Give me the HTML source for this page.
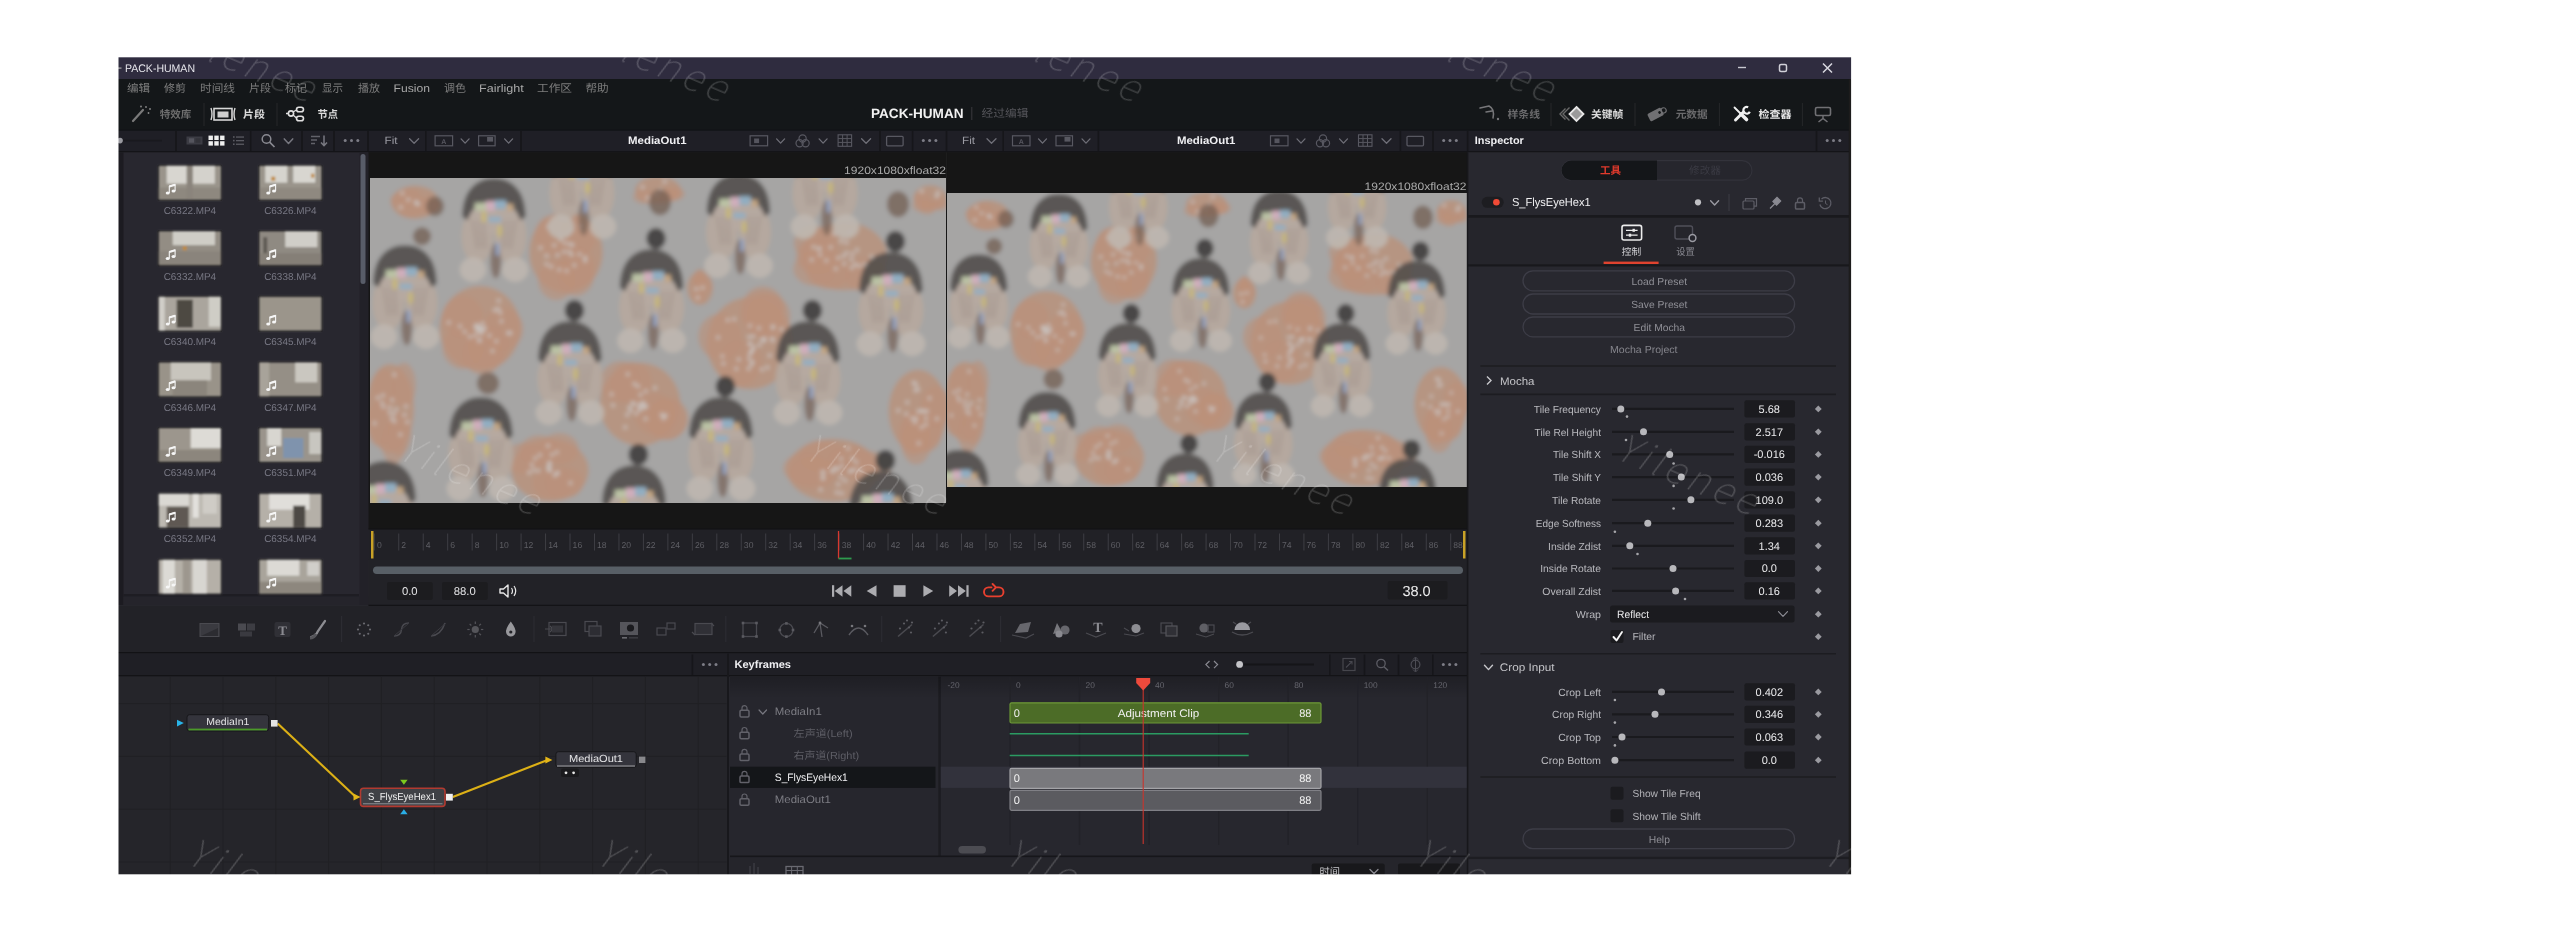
<!DOCTYPE html>
<html lang="zh-CN"><head><meta charset="utf-8"><title>PACK-HUMAN</title>
<style>
html,body{margin:0;padding:0;background:#fff;}
body{width:2560px;height:932px;overflow:hidden;position:relative;font-family:"Liberation Sans","Noto Sans CJK SC",sans-serif;}
svg{position:absolute;left:0;top:0;display:block;will-change:transform;}
svg text{font-family:"Liberation Sans","Noto Sans CJK SC",sans-serif;text-rendering:geometricPrecision;}
svg text.sf{font-family:"Liberation Serif","DejaVu Serif",serif;}
svg text.dj{font-family:"DejaVu Sans","Noto Sans CJK SC",sans-serif;}
svg text.wm{font-family:"Noto Sans CJK SC","Liberation Sans",sans-serif;font-weight:100;font-style:italic;}
</style></head><body>
<svg width="2560" height="932" viewBox="0 0 2560 932">
<defs>
<filter id="b4" x="-5%" y="-5%" width="110%" height="110%"><feGaussianBlur stdDeviation="2.2"/>
</filter>
<filter id="b06" x="-5%" y="-5%" width="110%" height="110%"><feGaussianBlur stdDeviation="0.9"/>
</filter>
<linearGradient id="shd" x1="0" y1="0" x2="0" y2="1"><stop offset="0" stop-color="#000" stop-opacity="0.2"/>
<stop offset="1" stop-color="#000" stop-opacity="0"/>
</linearGradient>
<clipPath id="app"><rect x="118" y="57" width="1734" height="818"/>
</clipPath>
</defs>
<g clip-path="url(#app)" >
<rect x="112.50" y="57.30" width="1738.60" height="823.00" fill="#26262c" />
<defs><g id="pA"><ellipse cx="-19.0" cy="42.0" rx="18" ry="31" fill="#b8a99e" opacity="0.95"/>
<ellipse cx="19.0" cy="42.0" rx="18" ry="31" fill="#b8a99e" opacity="0.95"/>
<ellipse cx="0.0" cy="22.0" rx="26" ry="18" fill="#b9aba0" opacity="0.95"/>
<line x1="-24" y1="24" x2="-19.2" y2="56" stroke="#8f7d72" stroke-width="1.6" opacity="0.6"/>
<line x1="-18" y1="24" x2="-14.4" y2="56" stroke="#8f7d72" stroke-width="1.6" opacity="0.6"/>
<line x1="-12" y1="24" x2="-9.6" y2="56" stroke="#8f7d72" stroke-width="1.6" opacity="0.6"/>
<line x1="12" y1="24" x2="9.6" y2="56" stroke="#8f7d72" stroke-width="1.6" opacity="0.6"/>
<line x1="18" y1="24" x2="14.4" y2="56" stroke="#8f7d72" stroke-width="1.6" opacity="0.6"/>
<line x1="24" y1="24" x2="19.2" y2="56" stroke="#8f7d72" stroke-width="1.6" opacity="0.6"/>
<ellipse cx="-24.0" cy="80.0" rx="15" ry="14" fill="#c4bbb2" opacity="0.9"/>
<ellipse cx="24.0" cy="80.0" rx="15" ry="14" fill="#c4bbb2" opacity="0.9"/>
<ellipse cx="2.0" cy="70.0" rx="6" ry="20" fill="#6d564a" opacity="0.7"/>
<path d="M-36 20 C-36 -10 -20 -24 0 -24 C20 -24 36 -10 36 20 L30 24 C24 6 12 2 0 2 C-12 2 -24 6 -30 24 Z" fill="#423e3c" opacity="0.88"/>
<ellipse cx="5.0" cy="-36.0" rx="11" ry="12" fill="#353130" opacity="0.95"/>
<rect x="-22" y="4" width="13" height="9" fill="#bfc9a6"/>
<rect x="-9" y="2" width="10" height="11" fill="#d8b0c0"/>
<rect x="1" y="1" width="13" height="10" fill="#8eb0c8"/>
<rect x="14" y="5" width="8" height="8" fill="#c8a67e"/>
<rect x="-14" y="14" width="5" height="12" fill="#cdbb70"/>
<rect x="-6" y="20" width="14" height="6" fill="#90b0c8"/>
<rect x="4" y="30" width="5" height="12" fill="#cdbb70"/>
<rect x="2" y="50" width="4" height="14" fill="#90a6cc"/>
</g>
<g id="pB"><ellipse cx="-19.0" cy="42.0" rx="18" ry="31" fill="#b8a99e" opacity="0.95"/>
<ellipse cx="19.0" cy="42.0" rx="18" ry="31" fill="#b8a99e" opacity="0.95"/>
<ellipse cx="0.0" cy="22.0" rx="26" ry="18" fill="#b9aba0" opacity="0.95"/>
<line x1="-24" y1="24" x2="-19.2" y2="56" stroke="#8f7d72" stroke-width="1.6" opacity="0.6"/>
<line x1="-18" y1="24" x2="-14.4" y2="56" stroke="#8f7d72" stroke-width="1.6" opacity="0.6"/>
<line x1="-12" y1="24" x2="-9.6" y2="56" stroke="#8f7d72" stroke-width="1.6" opacity="0.6"/>
<line x1="12" y1="24" x2="9.6" y2="56" stroke="#8f7d72" stroke-width="1.6" opacity="0.6"/>
<line x1="18" y1="24" x2="14.4" y2="56" stroke="#8f7d72" stroke-width="1.6" opacity="0.6"/>
<line x1="24" y1="24" x2="19.2" y2="56" stroke="#8f7d72" stroke-width="1.6" opacity="0.6"/>
<ellipse cx="-24.0" cy="80.0" rx="15" ry="14" fill="#c4bbb2" opacity="0.9"/>
<ellipse cx="24.0" cy="80.0" rx="15" ry="14" fill="#c4bbb2" opacity="0.9"/>
<ellipse cx="2.0" cy="70.0" rx="6" ry="20" fill="#6d564a" opacity="0.7"/>
<path d="M-36 20 C-36 -10 -20 -24 0 -24 C20 -24 36 -10 36 20 L30 24 C24 6 12 2 0 2 C-12 2 -24 6 -30 24 Z" fill="#423e3c" opacity="0.88"/>
<rect x="-22" y="4" width="13" height="9" fill="#bfc9a6"/>
<rect x="-9" y="2" width="10" height="11" fill="#d8b0c0"/>
<rect x="1" y="1" width="13" height="10" fill="#8eb0c8"/>
<rect x="14" y="5" width="8" height="8" fill="#c8a67e"/>
<rect x="-14" y="14" width="5" height="12" fill="#cdbb70"/>
<rect x="-6" y="20" width="14" height="6" fill="#90b0c8"/>
<rect x="4" y="30" width="5" height="12" fill="#cdbb70"/>
<rect x="2" y="50" width="4" height="14" fill="#90a6cc"/>
</g>
<clipPath id="pc"><rect x="0" y="0" width="576" height="324"/>
</clipPath><g id="pic" clip-path="url(#pc)"><g filter="url(#b4)"><rect x="-10" y="-10" width="596" height="344" fill="#a7a6a5"/>
<ellipse cx="45.0" cy="24.0" rx="23.92" ry="16.560000000000002" fill="#bf8e73" opacity="0.8"/>
<ellipse cx="40.1" cy="30.8" rx="11.96" ry="8.280000000000001" fill="#bf8e73" opacity="0.6400000000000001"/>
<ellipse cx="39.0" cy="18.2" rx="11.96" ry="8.280000000000001" fill="#bf8e73" opacity="0.6400000000000001"/>
<ellipse cx="32.3" cy="22.0" rx="11.96" ry="8.280000000000001" fill="#bf8e73" opacity="0.6400000000000001"/>
<ellipse cx="58.5" cy="27.6" rx="11.96" ry="8.280000000000001" fill="#bf8e73" opacity="0.6400000000000001"/>
<ellipse cx="58.3" cy="26.2" rx="11.96" ry="8.280000000000001" fill="#bf8e73" opacity="0.6400000000000001"/>
<circle cx="46.6" cy="24.5" r="2" fill="#d2cdc9" opacity="0.85"/>
<circle cx="30.9" cy="29.0" r="2" fill="#d2cdc9" opacity="0.85"/>
<circle cx="48.0" cy="26.1" r="2" fill="#d2cdc9" opacity="0.85"/>
<circle cx="32.3" cy="15.0" r="2" fill="#d2cdc9" opacity="0.85"/>
<circle cx="38.3" cy="21.6" r="2" fill="#d2cdc9" opacity="0.85"/>
<circle cx="45.9" cy="23.9" r="2" fill="#d2cdc9" opacity="0.85"/>
<ellipse cx="196.0" cy="74.0" rx="36.800000000000004" ry="40.480000000000004" fill="#bf8e73" opacity="0.8"/>
<ellipse cx="207.9" cy="57.7" rx="18.400000000000002" ry="20.240000000000002" fill="#bf8e73" opacity="0.6400000000000001"/>
<ellipse cx="206.2" cy="88.2" rx="18.400000000000002" ry="20.240000000000002" fill="#bf8e73" opacity="0.6400000000000001"/>
<ellipse cx="186.4" cy="101.5" rx="18.400000000000002" ry="20.240000000000002" fill="#bf8e73" opacity="0.6400000000000001"/>
<ellipse cx="205.8" cy="97.2" rx="18.400000000000002" ry="20.240000000000002" fill="#bf8e73" opacity="0.6400000000000001"/>
<ellipse cx="183.0" cy="57.0" rx="18.400000000000002" ry="20.240000000000002" fill="#bf8e73" opacity="0.6400000000000001"/>
<circle cx="194.2" cy="73.4" r="2" fill="#d2cdc9" opacity="0.85"/>
<circle cx="201.6" cy="76.4" r="2" fill="#d2cdc9" opacity="0.85"/>
<circle cx="190.6" cy="61.5" r="2" fill="#d2cdc9" opacity="0.85"/>
<circle cx="189.3" cy="91.5" r="2" fill="#d2cdc9" opacity="0.85"/>
<circle cx="187.6" cy="76.8" r="2" fill="#d2cdc9" opacity="0.85"/>
<circle cx="201.6" cy="52.2" r="2" fill="#d2cdc9" opacity="0.85"/>
<circle cx="196.6" cy="92.6" r="2" fill="#d2cdc9" opacity="0.85"/>
<circle cx="170.6" cy="69.6" r="2" fill="#d2cdc9" opacity="0.85"/>
<circle cx="194.9" cy="64.8" r="2" fill="#d2cdc9" opacity="0.85"/>
<circle cx="199.4" cy="73.5" r="2" fill="#d2cdc9" opacity="0.85"/>
<circle cx="176.6" cy="86.1" r="2" fill="#d2cdc9" opacity="0.85"/>
<circle cx="204.3" cy="86.9" r="2" fill="#d2cdc9" opacity="0.85"/>
<circle cx="215.1" cy="79.3" r="2" fill="#d2cdc9" opacity="0.85"/>
<circle cx="197.5" cy="55.5" r="2" fill="#d2cdc9" opacity="0.85"/>
<circle cx="202.5" cy="66.8" r="2" fill="#d2cdc9" opacity="0.85"/>
<circle cx="190.1" cy="55.9" r="2" fill="#d2cdc9" opacity="0.85"/>
<circle cx="184.2" cy="66.9" r="2" fill="#d2cdc9" opacity="0.85"/>
<circle cx="210.8" cy="48.1" r="2" fill="#d2cdc9" opacity="0.85"/>
<circle cx="176.7" cy="77.5" r="2" fill="#d2cdc9" opacity="0.85"/>
<circle cx="215.2" cy="82.4" r="2" fill="#d2cdc9" opacity="0.85"/>
<circle cx="178.3" cy="48.4" r="2" fill="#d2cdc9" opacity="0.85"/>
<circle cx="199.6" cy="65.7" r="2" fill="#d2cdc9" opacity="0.85"/>
<circle cx="181.2" cy="88.3" r="2" fill="#d2cdc9" opacity="0.85"/>
<circle cx="209.5" cy="76.1" r="2" fill="#d2cdc9" opacity="0.85"/>
<ellipse cx="288.0" cy="12.0" rx="23.0" ry="13.8" fill="#bf8e73" opacity="0.8"/>
<ellipse cx="293.1" cy="17.4" rx="11.5" ry="6.9" fill="#bf8e73" opacity="0.6400000000000001"/>
<ellipse cx="303.2" cy="15.5" rx="11.5" ry="6.9" fill="#bf8e73" opacity="0.6400000000000001"/>
<ellipse cx="295.9" cy="17.0" rx="11.5" ry="6.9" fill="#bf8e73" opacity="0.6400000000000001"/>
<ellipse cx="274.7" cy="18.5" rx="11.5" ry="6.9" fill="#bf8e73" opacity="0.6400000000000001"/>
<ellipse cx="299.7" cy="15.9" rx="11.5" ry="6.9" fill="#bf8e73" opacity="0.6400000000000001"/>
<circle cx="272.5" cy="9.0" r="2" fill="#d2cdc9" opacity="0.85"/>
<circle cx="294.7" cy="3.3" r="2" fill="#d2cdc9" opacity="0.85"/>
<circle cx="286.6" cy="16.5" r="2" fill="#d2cdc9" opacity="0.85"/>
<circle cx="277.7" cy="19.6" r="2" fill="#d2cdc9" opacity="0.85"/>
<circle cx="290.7" cy="11.6" r="2" fill="#d2cdc9" opacity="0.85"/>
<ellipse cx="110.0" cy="150.0" rx="40.480000000000004" ry="42.32" fill="#bf8e73" opacity="0.8"/>
<ellipse cx="118.9" cy="168.6" rx="20.240000000000002" ry="21.16" fill="#bf8e73" opacity="0.6400000000000001"/>
<ellipse cx="112.5" cy="175.0" rx="20.240000000000002" ry="21.16" fill="#bf8e73" opacity="0.6400000000000001"/>
<ellipse cx="92.7" cy="138.7" rx="20.240000000000002" ry="21.16" fill="#bf8e73" opacity="0.6400000000000001"/>
<ellipse cx="133.0" cy="150.6" rx="20.240000000000002" ry="21.16" fill="#bf8e73" opacity="0.6400000000000001"/>
<ellipse cx="92.7" cy="169.4" rx="20.240000000000002" ry="21.16" fill="#bf8e73" opacity="0.6400000000000001"/>
<circle cx="131.4" cy="143.1" r="2" fill="#d2cdc9" opacity="0.85"/>
<circle cx="90.1" cy="148.0" r="2" fill="#d2cdc9" opacity="0.85"/>
<circle cx="109.2" cy="148.4" r="2" fill="#d2cdc9" opacity="0.85"/>
<circle cx="130.3" cy="134.4" r="2" fill="#d2cdc9" opacity="0.85"/>
<circle cx="128.2" cy="130.8" r="2" fill="#d2cdc9" opacity="0.85"/>
<circle cx="99.9" cy="158.5" r="2" fill="#d2cdc9" opacity="0.85"/>
<circle cx="126.3" cy="163.0" r="2" fill="#d2cdc9" opacity="0.85"/>
<circle cx="112.0" cy="150.9" r="2" fill="#d2cdc9" opacity="0.85"/>
<circle cx="111.4" cy="155.3" r="2" fill="#d2cdc9" opacity="0.85"/>
<circle cx="109.1" cy="151.5" r="2" fill="#d2cdc9" opacity="0.85"/>
<circle cx="114.9" cy="150.0" r="2" fill="#d2cdc9" opacity="0.85"/>
<circle cx="119.5" cy="157.3" r="2" fill="#d2cdc9" opacity="0.85"/>
<circle cx="138.0" cy="154.7" r="2" fill="#d2cdc9" opacity="0.85"/>
<circle cx="106.4" cy="146.7" r="2" fill="#d2cdc9" opacity="0.85"/>
<circle cx="109.8" cy="161.8" r="2" fill="#d2cdc9" opacity="0.85"/>
<circle cx="107.4" cy="153.1" r="2" fill="#d2cdc9" opacity="0.85"/>
<circle cx="128.7" cy="122.6" r="2" fill="#d2cdc9" opacity="0.85"/>
<circle cx="94.7" cy="153.5" r="2" fill="#d2cdc9" opacity="0.85"/>
<circle cx="112.8" cy="151.8" r="2" fill="#d2cdc9" opacity="0.85"/>
<circle cx="105.3" cy="157.5" r="2" fill="#d2cdc9" opacity="0.85"/>
<circle cx="112.5" cy="145.2" r="2" fill="#d2cdc9" opacity="0.85"/>
<circle cx="140.5" cy="154.7" r="2" fill="#d2cdc9" opacity="0.85"/>
<circle cx="105.3" cy="149.1" r="2" fill="#d2cdc9" opacity="0.85"/>
<circle cx="109.2" cy="149.8" r="2" fill="#d2cdc9" opacity="0.85"/>
<circle cx="78.8" cy="144.2" r="2" fill="#d2cdc9" opacity="0.85"/>
<circle cx="124.7" cy="132.1" r="2" fill="#d2cdc9" opacity="0.85"/>
<circle cx="109.2" cy="162.4" r="2" fill="#d2cdc9" opacity="0.85"/>
<circle cx="122.5" cy="172.7" r="2" fill="#d2cdc9" opacity="0.85"/>
<ellipse cx="380.0" cy="165.0" rx="43.24" ry="46.0" fill="#bf8e73" opacity="0.8"/>
<ellipse cx="349.9" cy="158.4" rx="21.62" ry="23.0" fill="#bf8e73" opacity="0.6400000000000001"/>
<ellipse cx="369.9" cy="184.8" rx="21.62" ry="23.0" fill="#bf8e73" opacity="0.6400000000000001"/>
<ellipse cx="392.9" cy="131.1" rx="21.62" ry="23.0" fill="#bf8e73" opacity="0.6400000000000001"/>
<ellipse cx="398.7" cy="138.4" rx="21.62" ry="23.0" fill="#bf8e73" opacity="0.6400000000000001"/>
<ellipse cx="392.5" cy="135.9" rx="21.62" ry="23.0" fill="#bf8e73" opacity="0.6400000000000001"/>
<circle cx="382.6" cy="183.8" r="2" fill="#d2cdc9" opacity="0.85"/>
<circle cx="379.4" cy="165.8" r="2" fill="#d2cdc9" opacity="0.85"/>
<circle cx="389.5" cy="166.8" r="2" fill="#d2cdc9" opacity="0.85"/>
<circle cx="378.6" cy="190.4" r="2" fill="#d2cdc9" opacity="0.85"/>
<circle cx="394.9" cy="160.5" r="2" fill="#d2cdc9" opacity="0.85"/>
<circle cx="411.5" cy="150.9" r="2" fill="#d2cdc9" opacity="0.85"/>
<circle cx="392.1" cy="161.2" r="2" fill="#d2cdc9" opacity="0.85"/>
<circle cx="381.5" cy="173.2" r="2" fill="#d2cdc9" opacity="0.85"/>
<circle cx="382.3" cy="172.1" r="2" fill="#d2cdc9" opacity="0.85"/>
<circle cx="357.8" cy="141.8" r="2" fill="#d2cdc9" opacity="0.85"/>
<circle cx="388.9" cy="150.1" r="2" fill="#d2cdc9" opacity="0.85"/>
<circle cx="364.1" cy="140.9" r="2" fill="#d2cdc9" opacity="0.85"/>
<circle cx="399.7" cy="177.3" r="2" fill="#d2cdc9" opacity="0.85"/>
<circle cx="402.8" cy="149.5" r="2" fill="#d2cdc9" opacity="0.85"/>
<circle cx="380.0" cy="147.4" r="2" fill="#d2cdc9" opacity="0.85"/>
<circle cx="391.9" cy="191.2" r="2" fill="#d2cdc9" opacity="0.85"/>
<circle cx="366.3" cy="190.6" r="2" fill="#d2cdc9" opacity="0.85"/>
<circle cx="393.5" cy="162.4" r="2" fill="#d2cdc9" opacity="0.85"/>
<circle cx="353.4" cy="185.3" r="2" fill="#d2cdc9" opacity="0.85"/>
<circle cx="379.1" cy="158.8" r="2" fill="#d2cdc9" opacity="0.85"/>
<circle cx="383.7" cy="169.0" r="2" fill="#d2cdc9" opacity="0.85"/>
<circle cx="403.0" cy="148.2" r="2" fill="#d2cdc9" opacity="0.85"/>
<circle cx="397.4" cy="189.2" r="2" fill="#d2cdc9" opacity="0.85"/>
<circle cx="402.6" cy="161.9" r="2" fill="#d2cdc9" opacity="0.85"/>
<circle cx="368.8" cy="181.3" r="2" fill="#d2cdc9" opacity="0.85"/>
<circle cx="380.3" cy="165.4" r="2" fill="#d2cdc9" opacity="0.85"/>
<circle cx="402.1" cy="160.6" r="2" fill="#d2cdc9" opacity="0.85"/>
<circle cx="348.1" cy="159.3" r="2" fill="#d2cdc9" opacity="0.85"/>
<circle cx="352.4" cy="178.0" r="2" fill="#d2cdc9" opacity="0.85"/>
<circle cx="383.3" cy="158.1" r="2" fill="#d2cdc9" opacity="0.85"/>
<circle cx="379.9" cy="175.8" r="2" fill="#d2cdc9" opacity="0.85"/>
<circle cx="381.2" cy="186.5" r="2" fill="#d2cdc9" opacity="0.85"/>
<circle cx="379.2" cy="180.4" r="2" fill="#d2cdc9" opacity="0.85"/>
<ellipse cx="474.0" cy="78.0" rx="43.24" ry="34.04" fill="#bf8e73" opacity="0.8"/>
<ellipse cx="496.5" cy="97.1" rx="21.62" ry="17.02" fill="#bf8e73" opacity="0.6400000000000001"/>
<ellipse cx="458.7" cy="93.8" rx="21.62" ry="17.02" fill="#bf8e73" opacity="0.6400000000000001"/>
<ellipse cx="445.4" cy="65.1" rx="21.62" ry="17.02" fill="#bf8e73" opacity="0.6400000000000001"/>
<ellipse cx="444.9" cy="90.5" rx="21.62" ry="17.02" fill="#bf8e73" opacity="0.6400000000000001"/>
<ellipse cx="447.5" cy="77.8" rx="21.62" ry="17.02" fill="#bf8e73" opacity="0.6400000000000001"/>
<circle cx="473.4" cy="77.9" r="2" fill="#d2cdc9" opacity="0.85"/>
<circle cx="468.1" cy="79.8" r="2" fill="#d2cdc9" opacity="0.85"/>
<circle cx="501.6" cy="78.5" r="2" fill="#d2cdc9" opacity="0.85"/>
<circle cx="481.7" cy="89.4" r="2" fill="#d2cdc9" opacity="0.85"/>
<circle cx="471.0" cy="63.0" r="2" fill="#d2cdc9" opacity="0.85"/>
<circle cx="465.8" cy="90.5" r="2" fill="#d2cdc9" opacity="0.85"/>
<circle cx="448.5" cy="70.7" r="2" fill="#d2cdc9" opacity="0.85"/>
<circle cx="489.2" cy="87.4" r="2" fill="#d2cdc9" opacity="0.85"/>
<circle cx="474.1" cy="85.5" r="2" fill="#d2cdc9" opacity="0.85"/>
<circle cx="476.4" cy="64.3" r="2" fill="#d2cdc9" opacity="0.85"/>
<circle cx="449.6" cy="70.2" r="2" fill="#d2cdc9" opacity="0.85"/>
<circle cx="487.0" cy="71.7" r="2" fill="#d2cdc9" opacity="0.85"/>
<circle cx="460.7" cy="69.1" r="2" fill="#d2cdc9" opacity="0.85"/>
<circle cx="450.1" cy="76.6" r="2" fill="#d2cdc9" opacity="0.85"/>
<circle cx="456.4" cy="82.3" r="2" fill="#d2cdc9" opacity="0.85"/>
<circle cx="441.7" cy="81.6" r="2" fill="#d2cdc9" opacity="0.85"/>
<circle cx="464.4" cy="55.4" r="2" fill="#d2cdc9" opacity="0.85"/>
<circle cx="482.4" cy="75.5" r="2" fill="#d2cdc9" opacity="0.85"/>
<circle cx="443.6" cy="68.7" r="2" fill="#d2cdc9" opacity="0.85"/>
<circle cx="476.5" cy="74.8" r="2" fill="#d2cdc9" opacity="0.85"/>
<circle cx="485.0" cy="86.3" r="2" fill="#d2cdc9" opacity="0.85"/>
<circle cx="481.5" cy="80.9" r="2" fill="#d2cdc9" opacity="0.85"/>
<circle cx="494.8" cy="86.1" r="2" fill="#d2cdc9" opacity="0.85"/>
<circle cx="480.5" cy="54.1" r="2" fill="#d2cdc9" opacity="0.85"/>
<ellipse cx="20.0" cy="230.0" rx="23.92" ry="44.160000000000004" fill="#bf8e73" opacity="0.8"/>
<ellipse cx="29.3" cy="255.0" rx="11.96" ry="22.080000000000002" fill="#bf8e73" opacity="0.6400000000000001"/>
<ellipse cx="14.1" cy="213.0" rx="11.96" ry="22.080000000000002" fill="#bf8e73" opacity="0.6400000000000001"/>
<ellipse cx="33.9" cy="206.6" rx="11.96" ry="22.080000000000002" fill="#bf8e73" opacity="0.6400000000000001"/>
<ellipse cx="23.6" cy="263.9" rx="11.96" ry="22.080000000000002" fill="#bf8e73" opacity="0.6400000000000001"/>
<ellipse cx="8.6" cy="245.7" rx="11.96" ry="22.080000000000002" fill="#bf8e73" opacity="0.6400000000000001"/>
<circle cx="35.9" cy="228.0" r="2" fill="#d2cdc9" opacity="0.85"/>
<circle cx="24.4" cy="242.9" r="2" fill="#d2cdc9" opacity="0.85"/>
<circle cx="13.5" cy="228.8" r="2" fill="#d2cdc9" opacity="0.85"/>
<circle cx="22.0" cy="240.6" r="2" fill="#d2cdc9" opacity="0.85"/>
<circle cx="19.9" cy="229.3" r="2" fill="#d2cdc9" opacity="0.85"/>
<circle cx="12.0" cy="224.8" r="2" fill="#d2cdc9" opacity="0.85"/>
<circle cx="26.3" cy="231.3" r="2" fill="#d2cdc9" opacity="0.85"/>
<circle cx="13.0" cy="217.3" r="2" fill="#d2cdc9" opacity="0.85"/>
<circle cx="37.3" cy="243.7" r="2" fill="#d2cdc9" opacity="0.85"/>
<circle cx="24.4" cy="196.6" r="2" fill="#d2cdc9" opacity="0.85"/>
<circle cx="24.0" cy="235.7" r="2" fill="#d2cdc9" opacity="0.85"/>
<circle cx="34.4" cy="236.8" r="2" fill="#d2cdc9" opacity="0.85"/>
<circle cx="19.7" cy="234.5" r="2" fill="#d2cdc9" opacity="0.85"/>
<circle cx="4.6" cy="245.1" r="2" fill="#d2cdc9" opacity="0.85"/>
<circle cx="22.1" cy="221.7" r="2" fill="#d2cdc9" opacity="0.85"/>
<circle cx="30.4" cy="256.2" r="2" fill="#d2cdc9" opacity="0.85"/>
<circle cx="7.9" cy="219.4" r="2" fill="#d2cdc9" opacity="0.85"/>
<ellipse cx="270.0" cy="226.0" rx="40.480000000000004" ry="41.4" fill="#bf8e73" opacity="0.8"/>
<ellipse cx="284.5" cy="235.3" rx="20.240000000000002" ry="20.7" fill="#bf8e73" opacity="0.6400000000000001"/>
<ellipse cx="261.2" cy="204.2" rx="20.240000000000002" ry="20.7" fill="#bf8e73" opacity="0.6400000000000001"/>
<ellipse cx="298.2" cy="240.1" rx="20.240000000000002" ry="20.7" fill="#bf8e73" opacity="0.6400000000000001"/>
<ellipse cx="250.6" cy="203.7" rx="20.240000000000002" ry="20.7" fill="#bf8e73" opacity="0.6400000000000001"/>
<ellipse cx="296.0" cy="241.4" rx="20.240000000000002" ry="20.7" fill="#bf8e73" opacity="0.6400000000000001"/>
<circle cx="295.5" cy="237.6" r="2" fill="#d2cdc9" opacity="0.85"/>
<circle cx="259.5" cy="229.2" r="2" fill="#d2cdc9" opacity="0.85"/>
<circle cx="241.6" cy="216.0" r="2" fill="#d2cdc9" opacity="0.85"/>
<circle cx="269.5" cy="230.3" r="2" fill="#d2cdc9" opacity="0.85"/>
<circle cx="262.4" cy="224.7" r="2" fill="#d2cdc9" opacity="0.85"/>
<circle cx="274.0" cy="229.4" r="2" fill="#d2cdc9" opacity="0.85"/>
<circle cx="276.2" cy="228.1" r="2" fill="#d2cdc9" opacity="0.85"/>
<circle cx="266.3" cy="235.3" r="2" fill="#d2cdc9" opacity="0.85"/>
<circle cx="270.5" cy="216.4" r="2" fill="#d2cdc9" opacity="0.85"/>
<circle cx="264.2" cy="226.0" r="2" fill="#d2cdc9" opacity="0.85"/>
<circle cx="269.7" cy="226.5" r="2" fill="#d2cdc9" opacity="0.85"/>
<circle cx="270.0" cy="226.5" r="2" fill="#d2cdc9" opacity="0.85"/>
<circle cx="268.1" cy="207.9" r="2" fill="#d2cdc9" opacity="0.85"/>
<circle cx="275.7" cy="240.6" r="2" fill="#d2cdc9" opacity="0.85"/>
<circle cx="273.2" cy="224.6" r="2" fill="#d2cdc9" opacity="0.85"/>
<circle cx="275.8" cy="213.0" r="2" fill="#d2cdc9" opacity="0.85"/>
<circle cx="243.0" cy="226.9" r="2" fill="#d2cdc9" opacity="0.85"/>
<circle cx="257.2" cy="236.5" r="2" fill="#d2cdc9" opacity="0.85"/>
<circle cx="257.8" cy="195.9" r="2" fill="#d2cdc9" opacity="0.85"/>
<circle cx="255.2" cy="249.0" r="2" fill="#d2cdc9" opacity="0.85"/>
<circle cx="264.4" cy="205.7" r="2" fill="#d2cdc9" opacity="0.85"/>
<circle cx="260.7" cy="232.5" r="2" fill="#d2cdc9" opacity="0.85"/>
<circle cx="274.0" cy="227.4" r="2" fill="#d2cdc9" opacity="0.85"/>
<circle cx="291.7" cy="236.5" r="2" fill="#d2cdc9" opacity="0.85"/>
<circle cx="269.8" cy="231.4" r="2" fill="#d2cdc9" opacity="0.85"/>
<circle cx="293.5" cy="240.1" r="2" fill="#d2cdc9" opacity="0.85"/>
<circle cx="284.9" cy="209.8" r="2" fill="#d2cdc9" opacity="0.85"/>
<ellipse cx="548.0" cy="233.0" rx="29.44" ry="41.4" fill="#bf8e73" opacity="0.8"/>
<ellipse cx="545.1" cy="253.2" rx="14.72" ry="20.7" fill="#bf8e73" opacity="0.6400000000000001"/>
<ellipse cx="543.4" cy="256.3" rx="14.72" ry="20.7" fill="#bf8e73" opacity="0.6400000000000001"/>
<ellipse cx="557.4" cy="253.0" rx="14.72" ry="20.7" fill="#bf8e73" opacity="0.6400000000000001"/>
<ellipse cx="546.1" cy="265.4" rx="14.72" ry="20.7" fill="#bf8e73" opacity="0.6400000000000001"/>
<ellipse cx="565.9" cy="228.5" rx="14.72" ry="20.7" fill="#bf8e73" opacity="0.6400000000000001"/>
<circle cx="548.8" cy="265.0" r="2" fill="#d2cdc9" opacity="0.85"/>
<circle cx="544.9" cy="244.0" r="2" fill="#d2cdc9" opacity="0.85"/>
<circle cx="557.0" cy="233.1" r="2" fill="#d2cdc9" opacity="0.85"/>
<circle cx="536.3" cy="235.7" r="2" fill="#d2cdc9" opacity="0.85"/>
<circle cx="551.6" cy="248.9" r="2" fill="#d2cdc9" opacity="0.85"/>
<circle cx="554.2" cy="233.3" r="2" fill="#d2cdc9" opacity="0.85"/>
<circle cx="556.0" cy="240.1" r="2" fill="#d2cdc9" opacity="0.85"/>
<circle cx="548.5" cy="233.2" r="2" fill="#d2cdc9" opacity="0.85"/>
<circle cx="546.2" cy="240.3" r="2" fill="#d2cdc9" opacity="0.85"/>
<circle cx="537.3" cy="224.1" r="2" fill="#d2cdc9" opacity="0.85"/>
<circle cx="548.0" cy="211.2" r="2" fill="#d2cdc9" opacity="0.85"/>
<circle cx="543.6" cy="204.6" r="2" fill="#d2cdc9" opacity="0.85"/>
<circle cx="542.1" cy="239.9" r="2" fill="#d2cdc9" opacity="0.85"/>
<circle cx="551.5" cy="232.5" r="2" fill="#d2cdc9" opacity="0.85"/>
<circle cx="545.5" cy="212.0" r="2" fill="#d2cdc9" opacity="0.85"/>
<circle cx="566.9" cy="240.5" r="2" fill="#d2cdc9" opacity="0.85"/>
<circle cx="559.5" cy="219.9" r="2" fill="#d2cdc9" opacity="0.85"/>
<circle cx="546.0" cy="206.2" r="2" fill="#d2cdc9" opacity="0.85"/>
<circle cx="555.9" cy="246.3" r="2" fill="#d2cdc9" opacity="0.85"/>
<circle cx="528.3" cy="232.3" r="2" fill="#d2cdc9" opacity="0.85"/>
<ellipse cx="180.0" cy="292.0" rx="38.64" ry="31.28" fill="#bf8e73" opacity="0.8"/>
<ellipse cx="189.4" cy="270.5" rx="19.32" ry="15.64" fill="#bf8e73" opacity="0.6400000000000001"/>
<ellipse cx="154.7" cy="280.1" rx="19.32" ry="15.64" fill="#bf8e73" opacity="0.6400000000000001"/>
<ellipse cx="169.2" cy="272.7" rx="19.32" ry="15.64" fill="#bf8e73" opacity="0.6400000000000001"/>
<ellipse cx="182.0" cy="304.8" rx="19.32" ry="15.64" fill="#bf8e73" opacity="0.6400000000000001"/>
<ellipse cx="194.1" cy="304.6" rx="19.32" ry="15.64" fill="#bf8e73" opacity="0.6400000000000001"/>
<circle cx="200.4" cy="304.8" r="2" fill="#d2cdc9" opacity="0.85"/>
<circle cx="161.9" cy="286.4" r="2" fill="#d2cdc9" opacity="0.85"/>
<circle cx="165.2" cy="279.9" r="2" fill="#d2cdc9" opacity="0.85"/>
<circle cx="179.9" cy="292.0" r="2" fill="#d2cdc9" opacity="0.85"/>
<circle cx="186.8" cy="274.1" r="2" fill="#d2cdc9" opacity="0.85"/>
<circle cx="163.5" cy="291.8" r="2" fill="#d2cdc9" opacity="0.85"/>
<circle cx="178.9" cy="290.6" r="2" fill="#d2cdc9" opacity="0.85"/>
<circle cx="179.3" cy="285.7" r="2" fill="#d2cdc9" opacity="0.85"/>
<circle cx="187.3" cy="295.0" r="2" fill="#d2cdc9" opacity="0.85"/>
<circle cx="179.2" cy="286.9" r="2" fill="#d2cdc9" opacity="0.85"/>
<circle cx="178.0" cy="267.6" r="2" fill="#d2cdc9" opacity="0.85"/>
<circle cx="168.2" cy="292.4" r="2" fill="#d2cdc9" opacity="0.85"/>
<circle cx="159.1" cy="294.3" r="2" fill="#d2cdc9" opacity="0.85"/>
<circle cx="182.0" cy="276.6" r="2" fill="#d2cdc9" opacity="0.85"/>
<circle cx="178.5" cy="290.5" r="2" fill="#d2cdc9" opacity="0.85"/>
<circle cx="184.7" cy="297.1" r="2" fill="#d2cdc9" opacity="0.85"/>
<circle cx="179.6" cy="284.4" r="2" fill="#d2cdc9" opacity="0.85"/>
<circle cx="179.6" cy="291.9" r="2" fill="#d2cdc9" opacity="0.85"/>
<circle cx="187.7" cy="294.5" r="2" fill="#d2cdc9" opacity="0.85"/>
<circle cx="169.9" cy="276.7" r="2" fill="#d2cdc9" opacity="0.85"/>
<ellipse cx="463.0" cy="292.0" rx="46.0" ry="31.28" fill="#bf8e73" opacity="0.8"/>
<ellipse cx="452.3" cy="277.6" rx="23.0" ry="15.64" fill="#bf8e73" opacity="0.6400000000000001"/>
<ellipse cx="436.2" cy="290.1" rx="23.0" ry="15.64" fill="#bf8e73" opacity="0.6400000000000001"/>
<ellipse cx="442.9" cy="295.0" rx="23.0" ry="15.64" fill="#bf8e73" opacity="0.6400000000000001"/>
<ellipse cx="480.3" cy="282.7" rx="23.0" ry="15.64" fill="#bf8e73" opacity="0.6400000000000001"/>
<ellipse cx="498.3" cy="288.6" rx="23.0" ry="15.64" fill="#bf8e73" opacity="0.6400000000000001"/>
<circle cx="479.8" cy="293.3" r="2" fill="#d2cdc9" opacity="0.85"/>
<circle cx="478.1" cy="270.0" r="2" fill="#d2cdc9" opacity="0.85"/>
<circle cx="453.6" cy="294.1" r="2" fill="#d2cdc9" opacity="0.85"/>
<circle cx="471.7" cy="314.9" r="2" fill="#d2cdc9" opacity="0.85"/>
<circle cx="468.2" cy="306.1" r="2" fill="#d2cdc9" opacity="0.85"/>
<circle cx="475.1" cy="302.2" r="2" fill="#d2cdc9" opacity="0.85"/>
<circle cx="467.7" cy="291.0" r="2" fill="#d2cdc9" opacity="0.85"/>
<circle cx="471.0" cy="280.5" r="2" fill="#d2cdc9" opacity="0.85"/>
<circle cx="482.6" cy="280.5" r="2" fill="#d2cdc9" opacity="0.85"/>
<circle cx="466.9" cy="314.3" r="2" fill="#d2cdc9" opacity="0.85"/>
<circle cx="462.1" cy="292.1" r="2" fill="#d2cdc9" opacity="0.85"/>
<circle cx="481.1" cy="292.3" r="2" fill="#d2cdc9" opacity="0.85"/>
<circle cx="452.4" cy="294.3" r="2" fill="#d2cdc9" opacity="0.85"/>
<circle cx="471.0" cy="298.7" r="2" fill="#d2cdc9" opacity="0.85"/>
<circle cx="450.6" cy="311.2" r="2" fill="#d2cdc9" opacity="0.85"/>
<circle cx="490.6" cy="292.2" r="2" fill="#d2cdc9" opacity="0.85"/>
<circle cx="465.3" cy="289.5" r="2" fill="#d2cdc9" opacity="0.85"/>
<circle cx="486.4" cy="284.0" r="2" fill="#d2cdc9" opacity="0.85"/>
<circle cx="471.7" cy="287.8" r="2" fill="#d2cdc9" opacity="0.85"/>
<circle cx="453.0" cy="299.1" r="2" fill="#d2cdc9" opacity="0.85"/>
<circle cx="484.7" cy="291.8" r="2" fill="#d2cdc9" opacity="0.85"/>
<circle cx="452.9" cy="300.2" r="2" fill="#d2cdc9" opacity="0.85"/>
<circle cx="462.7" cy="293.2" r="2" fill="#d2cdc9" opacity="0.85"/>
<ellipse cx="560.0" cy="20.0" rx="16.560000000000002" ry="12.88" fill="#bf8e73" opacity="0.8"/>
<ellipse cx="569.8" cy="25.6" rx="8.280000000000001" ry="6.44" fill="#bf8e73" opacity="0.6400000000000001"/>
<ellipse cx="557.2" cy="29.7" rx="8.280000000000001" ry="6.44" fill="#bf8e73" opacity="0.6400000000000001"/>
<ellipse cx="560.0" cy="26.5" rx="8.280000000000001" ry="6.44" fill="#bf8e73" opacity="0.6400000000000001"/>
<ellipse cx="552.1" cy="19.6" rx="8.280000000000001" ry="6.44" fill="#bf8e73" opacity="0.6400000000000001"/>
<ellipse cx="550.9" cy="27.2" rx="8.280000000000001" ry="6.44" fill="#bf8e73" opacity="0.6400000000000001"/>
<circle cx="568.0" cy="14.4" r="2" fill="#d2cdc9" opacity="0.85"/>
<circle cx="551.7" cy="13.1" r="2" fill="#d2cdc9" opacity="0.85"/>
<circle cx="566.8" cy="17.9" r="2" fill="#d2cdc9" opacity="0.85"/>
<ellipse cx="330.0" cy="110.0" rx="12.88" ry="16.560000000000002" fill="#bf8e73" opacity="0.8"/>
<ellipse cx="329.0" cy="103.2" rx="6.44" ry="8.280000000000001" fill="#bf8e73" opacity="0.6400000000000001"/>
<ellipse cx="329.2" cy="100.5" rx="6.44" ry="8.280000000000001" fill="#bf8e73" opacity="0.6400000000000001"/>
<ellipse cx="330.1" cy="99.1" rx="6.44" ry="8.280000000000001" fill="#bf8e73" opacity="0.6400000000000001"/>
<ellipse cx="328.8" cy="116.8" rx="6.44" ry="8.280000000000001" fill="#bf8e73" opacity="0.6400000000000001"/>
<ellipse cx="335.2" cy="106.7" rx="6.44" ry="8.280000000000001" fill="#bf8e73" opacity="0.6400000000000001"/>
<circle cx="326.5" cy="110.8" r="2" fill="#d2cdc9" opacity="0.85"/>
<circle cx="327.8" cy="119.4" r="2" fill="#d2cdc9" opacity="0.85"/>
<circle cx="332.6" cy="109.5" r="2" fill="#d2cdc9" opacity="0.85"/>
<use href="#pB" transform="translate(212.0 -22.0) scale(0.88)"/>
<use href="#pB" transform="translate(455.0 -22.0) scale(0.88)"/>
<use href="#pB" transform="translate(124.0 21.0) scale(0.88)"/>
<use href="#pA" transform="translate(281.6 92.0) scale(0.88)"/>
<use href="#pB" transform="translate(368.5 17.0) scale(0.88)"/>
<use href="#pA" transform="translate(521.0 95.0) scale(0.88)"/>
<use href="#pB" transform="translate(35.0 88.0) scale(0.88)"/>
<use href="#pA" transform="translate(200.0 164.0) scale(0.88)"/>
<use href="#pA" transform="translate(438.0 164.0) scale(0.88)"/>
<use href="#pB" transform="translate(111.0 240.0) scale(0.88)"/>
<use href="#pA" transform="translate(351.0 240.0) scale(0.88)"/>
<use href="#pA" transform="translate(264.0 308.0) scale(0.88)"/>
<use href="#pA" transform="translate(511.0 314.0) scale(0.88)"/>
<use href="#pB" transform="translate(14.0 304.0) scale(0.88)"/>
<ellipse cx="290.0" cy="24.0" rx="11" ry="13" fill="#6b5346" opacity="0.75"/>
<ellipse cx="528.0" cy="26.0" rx="11" ry="13" fill="#6b5346" opacity="0.75"/>
<ellipse cx="118.0" cy="205.0" rx="11" ry="11" fill="#6b5346" opacity="0.75"/>
<ellipse cx="52.0" cy="58.0" rx="9" ry="9" fill="#6b5346" opacity="0.75"/>
<ellipse cx="65.0" cy="28.0" rx="9" ry="10" fill="#6b5346" opacity="0.75"/>
<rect x="-10" y="-10" width="596" height="344" fill="#a5a4a3" opacity="0.14"/>
</g>
</g></defs><rect x="112.50" y="53.30" width="1744.60" height="25.70" fill="#2f2c3f" />
<text x="125.00" y="72.16" font-size="11" fill="#e8e8ee" textLength="70.0" lengthAdjust="spacingAndGlyphs" >PACK-HUMAN</text>
<rect x="112.50" y="67.50" width="9.00" height="1.20" fill="#aaa" />
<line x1="1738.00" y1="67.50" x2="1746.00" y2="67.50" stroke="#c8c8d0" stroke-width="1.4" />
<rect x="1779.50" y="64.50" width="7.00" height="7.00" fill="none" rx="1.5" stroke="#d0d0d8" stroke-width="1.5" />
<path d="M1823 63.5 L1832 72.5 M1832 63.5 L1823 72.5" fill="none" stroke="#d8d8e0" stroke-width="1.5" />
<rect x="112.50" y="79.00" width="1738.60" height="51.00" fill="#141719" />
<text x="127.00" y="91.96" font-size="11" fill="#7e7e7e" textLength="23.0" lengthAdjust="spacingAndGlyphs" >编辑</text>
<text x="164.00" y="91.96" font-size="11" fill="#7e7e7e" textLength="22.0" lengthAdjust="spacingAndGlyphs" >修剪</text>
<text x="200.00" y="91.96" font-size="11" fill="#7e7e7e" textLength="35.0" lengthAdjust="spacingAndGlyphs" >时间线</text>
<text x="249.00" y="91.96" font-size="11" fill="#7e7e7e" textLength="22.0" lengthAdjust="spacingAndGlyphs" >片段</text>
<text x="285.00" y="91.96" font-size="11" fill="#7e7e7e" textLength="22.0" lengthAdjust="spacingAndGlyphs" >标记</text>
<text x="322.00" y="91.96" font-size="11" fill="#7e7e7e" textLength="21.0" lengthAdjust="spacingAndGlyphs" >显示</text>
<text x="358.00" y="91.96" font-size="11" fill="#7e7e7e" textLength="22.0" lengthAdjust="spacingAndGlyphs" >播放</text>
<text x="393.60" y="91.96" font-size="11" fill="#a8a8a8" textLength="36.4" lengthAdjust="spacingAndGlyphs" >Fusion</text>
<text x="444.00" y="91.96" font-size="11" fill="#7e7e7e" textLength="22.0" lengthAdjust="spacingAndGlyphs" >调色</text>
<text x="479.00" y="91.96" font-size="11" fill="#a8a8a8" textLength="44.7" lengthAdjust="spacingAndGlyphs" >Fairlight</text>
<text x="537.00" y="91.96" font-size="11" fill="#7e7e7e" textLength="35.0" lengthAdjust="spacingAndGlyphs" >工作区</text>
<text x="585.50" y="91.96" font-size="11" fill="#7e7e7e" textLength="23.2" lengthAdjust="spacingAndGlyphs" >帮助</text>
<path d="M133 121 L143 110" fill="none" stroke="#7a7a7a" stroke-width="2.2" stroke-linecap="round"/>
<circle cx="146.00" cy="107.00" r="0.9" fill="#8a8a8a"/>
<circle cx="148.50" cy="113.00" r="0.9" fill="#8a8a8a"/>
<circle cx="141.00" cy="106.50" r="0.9" fill="#8a8a8a"/>
<circle cx="150.00" cy="109.00" r="0.9" fill="#8a8a8a"/>
<text x="159.80" y="117.78" font-size="10.5" fill="#6e6e6e" font-weight="bold" textLength="31.6" lengthAdjust="spacingAndGlyphs" >特效库</text>
<line x1="204.00" y1="103.00" x2="204.00" y2="126.00" stroke="#26282a" stroke-width="1" />
<rect x="214.00" y="108.50" width="18.00" height="11.50" fill="none" stroke="#d8d8d8" stroke-width="1.6" />
<rect x="217.50" y="111.50" width="11.00" height="6.00" fill="#cfcfcf" />
<path d="M211 108 q2 6 0 12 M235 108 q-2 6 0 12" fill="none" stroke="#d8d8d8" stroke-width="1.4" />
<text x="243.00" y="117.78" font-size="10.5" fill="#dcdcdc" font-weight="bold" textLength="22.0" lengthAdjust="spacingAndGlyphs" >片段</text>
<line x1="277.00" y1="103.00" x2="277.00" y2="126.00" stroke="#26282a" stroke-width="1" />
<circle cx="291.00" cy="113.50" r="2.6" fill="none" stroke="#e0e0e0" stroke-width="1.6"/>
<rect x="296.50" y="107.20" width="7.00" height="4.60" fill="none" rx="2.3" stroke="#e0e0e0" stroke-width="1.6" />
<rect x="296.50" y="116.20" width="7.00" height="4.60" fill="none" rx="2.3" stroke="#e0e0e0" stroke-width="1.6" />
<path d="M293 112 L296.5 110 M293 115 L296.5 118 M286 113.5 L288.4 113.5" fill="none" stroke="#e0e0e0" stroke-width="1.3" />
<text x="317.60" y="117.78" font-size="10.5" fill="#dcdcdc" font-weight="bold" textLength="20.5" lengthAdjust="spacingAndGlyphs" >节点</text>
<text x="871.00" y="117.66" font-size="13.5" fill="#f2f2f2" font-weight="bold" textLength="92.5" lengthAdjust="spacingAndGlyphs" >PACK-HUMAN</text>
<line x1="971.80" y1="107.00" x2="971.80" y2="120.00" stroke="#3a3a3e" stroke-width="1" />
<text x="981.60" y="117.46" font-size="11" fill="#55555a" textLength="46.8" lengthAdjust="spacingAndGlyphs" >经过编辑</text>
<path d="M1480 108 L1489 106 M1489 106 q6 3 4 12 M1486 112 l6 -1" fill="none" stroke="#77777a" stroke-width="1.5" stroke-linecap="round"/>
<circle cx="1498.00" cy="119.00" r="1.2" fill="#77777a"/>
<text x="1507.50" y="117.78" font-size="10.5" fill="#6a6a6c" font-weight="bold" textLength="32.5" lengthAdjust="spacingAndGlyphs" >样条线</text>
<line x1="1551.00" y1="103.00" x2="1551.00" y2="126.00" stroke="#26282a" stroke-width="1" />
<path d="M1569.5 107.5 l-6.5 6.5 l6.5 6.5 M1565.5 108.5 l-5.5 5.5 l5.5 5.5" fill="none" stroke="#6a6a6a" stroke-width="1.4" />
<path d="M1576.5 107 l7 7 l-7 7 l-7 -7 z" fill="#9a9a9a" stroke="#e6e6e6" stroke-width="1.8" />
<text x="1591.00" y="117.78" font-size="10.5" fill="#dcdcdc" font-weight="bold" textLength="32.4" lengthAdjust="spacingAndGlyphs" >关键帧</text>
<line x1="1635.00" y1="103.00" x2="1635.00" y2="126.00" stroke="#26282a" stroke-width="1" />
<g transform="rotate(-27 1657 114)"><rect x="1648" y="109.6" width="15" height="8.4" rx="1.6" fill="#707073"/>
<circle cx="1660" cy="113.8" r="1.4" fill="#131618"/>
<circle cx="1664.5" cy="113.8" r="2.6" fill="none" stroke="#707073" stroke-width="1.1"/>
</g>
<text x="1675.70" y="117.78" font-size="10.5" fill="#6a6a6c" font-weight="bold" textLength="32.0" lengthAdjust="spacingAndGlyphs" >元数据</text>
<line x1="1719.40" y1="103.00" x2="1719.40" y2="126.00" stroke="#26282a" stroke-width="1" />
<path d="M1734.5 107.5 L1741 114" fill="none" stroke="#f0f0f0" stroke-width="1.8" stroke-linecap="round"/>
<path d="M1741 114 L1746.5 119.5" fill="none" stroke="#f0f0f0" stroke-width="3.6" stroke-linecap="round"/>
<path d="M1735.5 120 L1743.5 112" fill="none" stroke="#f0f0f0" stroke-width="3" stroke-linecap="round"/>
<path d="M1748.2 107.2 a3.4 3.4 0 1 0 1.6 4.6" fill="none" stroke="#f0f0f0" stroke-width="2.2" />
<text x="1758.60" y="117.78" font-size="10.5" fill="#e6e6e6" font-weight="bold" textLength="33.0" lengthAdjust="spacingAndGlyphs" >检查器</text>
<line x1="1802.40" y1="103.00" x2="1802.40" y2="126.00" stroke="#26282a" stroke-width="1" />
<rect x="1815.50" y="107.50" width="15.00" height="8.00" fill="none" rx="1.5" stroke="#707074" stroke-width="1.6" />
<path d="M1823 116 l0 3 M1818.5 122 l4.5 -3.5 l4.5 3.5" fill="none" stroke="#707074" stroke-width="1.5" />
<rect x="112.50" y="130.00" width="1738.60" height="22.00" fill="#1f1f26" />
<line x1="112.50" y1="130.20" x2="1851.10" y2="130.20" stroke="#111316" stroke-width="1" />
<line x1="112.50" y1="151.80" x2="1851.10" y2="151.80" stroke="#121215" stroke-width="1.2" />
<circle cx="120.00" cy="140.60" r="2.8" fill="#9a9aa0"/>
<line x1="123.00" y1="140.60" x2="162.00" y2="140.60" stroke="#19191e" stroke-width="1.6" />
<line x1="176.00" y1="131.00" x2="176.00" y2="151.00" stroke="#16161a" stroke-width="1.6" />
<rect x="186.50" y="136.50" width="16.00" height="8.00" fill="#3c3c44" />
<rect x="189.00" y="138.30" width="5.00" height="4.40" fill="#55555e" />
<rect x="195.50" y="138.30" width="5.00" height="4.40" fill="#33333a" />
<rect x="208.50" y="135.60" width="4.40" height="4.40" fill="#f0f0f0" />
<rect x="208.50" y="141.20" width="4.40" height="4.40" fill="#f0f0f0" />
<rect x="214.30" y="135.60" width="4.40" height="4.40" fill="#f0f0f0" />
<rect x="214.30" y="141.20" width="4.40" height="4.40" fill="#f0f0f0" />
<rect x="220.10" y="135.60" width="4.40" height="4.40" fill="#f0f0f0" />
<rect x="220.10" y="141.20" width="4.40" height="4.40" fill="#f0f0f0" />
<rect x="233.00" y="136.20" width="1.60" height="1.60" fill="#5a5a62" />
<rect x="236.00" y="136.40" width="8.00" height="1.30" fill="#5a5a62" />
<rect x="233.00" y="139.80" width="1.60" height="1.60" fill="#5a5a62" />
<rect x="236.00" y="140.00" width="8.00" height="1.30" fill="#5a5a62" />
<rect x="233.00" y="143.40" width="1.60" height="1.60" fill="#5a5a62" />
<rect x="236.00" y="143.60" width="8.00" height="1.30" fill="#5a5a62" />
<line x1="250.70" y1="131.00" x2="250.70" y2="151.00" stroke="#16161a" stroke-width="1.6" />
<circle cx="266.50" cy="139.00" r="4.3" fill="none" stroke="#8a8a92" stroke-width="1.5"/>
<line x1="269.60" y1="142.20" x2="274.50" y2="147.00" stroke="#8a8a92" stroke-width="1.7" />
<path d="M284.30 138.90 L288.50 143.50 L292.70 138.90" fill="none" stroke="#777780" stroke-width="1.5" stroke-linecap="round" stroke-linejoin="round"/>
<line x1="302.00" y1="131.00" x2="302.00" y2="151.00" stroke="#16161a" stroke-width="1.6" />
<path d="M311 136.5 h9 M311 140 h6 M311 143.5 h4" fill="none" stroke="#62626a" stroke-width="1.3" />
<path d="M324 135.5 v10 M321 142.5 l3 3.2 l3 -3.2" fill="none" stroke="#7a7a82" stroke-width="1.5" />
<line x1="334.00" y1="131.00" x2="334.00" y2="151.00" stroke="#16161a" stroke-width="1.6" />
<circle cx="345.20" cy="140.60" r="1.5" fill="#7d7d86"/>
<circle cx="351.50" cy="140.60" r="1.5" fill="#7d7d86"/>
<circle cx="357.80" cy="140.60" r="1.5" fill="#7d7d86"/>
<line x1="368.00" y1="131.00" x2="368.00" y2="151.00" stroke="#16161a" stroke-width="1.6" />
<text x="384.60" y="144.38" font-size="10.5" fill="#9c9ca4" textLength="13.0" lengthAdjust="spacingAndGlyphs" >Fit</text>
<path d="M409.60 138.75 L414.10 143.25 L418.60 138.75" fill="none" stroke="#6f6f78" stroke-width="1.3" stroke-linecap="round" stroke-linejoin="round"/>
<line x1="425.80" y1="131.00" x2="425.80" y2="151.00" stroke="#16161a" stroke-width="1.6" />
<rect x="435.10" y="135.80" width="17.50" height="10.00" fill="none" stroke="#585861" stroke-width="1.2" />
<text x="443.80" y="143.52" font-size="7" fill="#585861" text-anchor="middle" font-weight="bold" >A</text>
<path d="M461.10 138.90 L465.10 143.10 L469.10 138.90" fill="none" stroke="#6f6f78" stroke-width="1.3" stroke-linecap="round" stroke-linejoin="round"/>
<rect x="478.60" y="135.80" width="16.50" height="10.00" fill="none" stroke="#585861" stroke-width="1.2" />
<rect x="487.10" y="137.00" width="6.00" height="4.60" fill="#585861" />
<path d="M504.60 138.90 L508.60 143.10 L512.60 138.90" fill="none" stroke="#6f6f78" stroke-width="1.3" stroke-linecap="round" stroke-linejoin="round"/>
<line x1="521.00" y1="131.00" x2="521.00" y2="151.00" stroke="#16161a" stroke-width="1.6" />
<text x="657.30" y="144.49" font-size="10.8" fill="#efeff2" text-anchor="middle" font-weight="bold" textLength="58.5" lengthAdjust="spacingAndGlyphs" >MediaOut1</text>
<rect x="750.10" y="135.80" width="17.50" height="10.00" fill="none" stroke="#585861" stroke-width="1.2" />
<rect x="754.10" y="138.50" width="5.00" height="4.60" fill="#55555e" />
<path d="M776.60 138.90 L780.60 143.10 L784.60 138.90" fill="none" stroke="#6f6f78" stroke-width="1.3" stroke-linecap="round" stroke-linejoin="round"/>
<circle cx="802.60" cy="138.50" r="3.6" fill="none" stroke="#585861" stroke-width="1.2"/>
<circle cx="799.60" cy="143.30" r="3.6" fill="none" stroke="#585861" stroke-width="1.2"/>
<circle cx="805.60" cy="143.30" r="3.6" fill="none" stroke="#585861" stroke-width="1.2"/>
<path d="M819.10 138.90 L823.10 143.10 L827.10 138.90" fill="none" stroke="#6f6f78" stroke-width="1.3" stroke-linecap="round" stroke-linejoin="round"/>
<rect x="838.10" y="134.80" width="13.50" height="11.50" fill="none" stroke="#585861" stroke-width="1.1" />
<path d="M842.6 134.8 v11.5 M847.1 134.8 v11.5 M838.1 138.6 h13.5 M838.1 142.4 h13.5" fill="none" stroke="#585861" stroke-width="1" />
<path d="M861.60 138.75 L866.10 143.25 L870.60 138.75" fill="none" stroke="#6f6f78" stroke-width="1.3" stroke-linecap="round" stroke-linejoin="round"/>
<line x1="880.00" y1="131.00" x2="880.00" y2="151.00" stroke="#16161a" stroke-width="1.6" />
<rect x="886.60" y="136.30" width="16.50" height="9.50" fill="none" rx="1" stroke="#585861" stroke-width="1.3" />
<line x1="912.60" y1="131.00" x2="912.60" y2="151.00" stroke="#16161a" stroke-width="1.6" />
<circle cx="923.30" cy="140.60" r="1.5" fill="#7d7d86"/>
<circle cx="929.60" cy="140.60" r="1.5" fill="#7d7d86"/>
<circle cx="935.90" cy="140.60" r="1.5" fill="#7d7d86"/>
<line x1="946.50" y1="131.00" x2="946.50" y2="151.00" stroke="#16161a" stroke-width="1.6" />
<text x="962.00" y="144.38" font-size="10.5" fill="#9c9ca4" textLength="13.0" lengthAdjust="spacingAndGlyphs" >Fit</text>
<path d="M987.00 138.75 L991.50 143.25 L996.00 138.75" fill="none" stroke="#6f6f78" stroke-width="1.3" stroke-linecap="round" stroke-linejoin="round"/>
<line x1="1003.20" y1="131.00" x2="1003.20" y2="151.00" stroke="#16161a" stroke-width="1.6" />
<rect x="1012.50" y="135.80" width="17.50" height="10.00" fill="none" stroke="#585861" stroke-width="1.2" />
<text x="1021.20" y="143.52" font-size="7" fill="#585861" text-anchor="middle" font-weight="bold" >A</text>
<path d="M1038.50 138.90 L1042.50 143.10 L1046.50 138.90" fill="none" stroke="#6f6f78" stroke-width="1.3" stroke-linecap="round" stroke-linejoin="round"/>
<rect x="1056.00" y="135.80" width="16.50" height="10.00" fill="none" stroke="#585861" stroke-width="1.2" />
<rect x="1064.50" y="137.00" width="6.00" height="4.60" fill="#585861" />
<path d="M1082.00 138.90 L1086.00 143.10 L1090.00 138.90" fill="none" stroke="#6f6f78" stroke-width="1.3" stroke-linecap="round" stroke-linejoin="round"/>
<line x1="1098.40" y1="131.00" x2="1098.40" y2="151.00" stroke="#16161a" stroke-width="1.6" />
<text x="1206.20" y="144.49" font-size="10.8" fill="#efeff2" text-anchor="middle" font-weight="bold" textLength="58.5" lengthAdjust="spacingAndGlyphs" >MediaOut1</text>
<rect x="1270.50" y="135.80" width="17.50" height="10.00" fill="none" stroke="#585861" stroke-width="1.2" />
<rect x="1274.50" y="138.50" width="5.00" height="4.60" fill="#55555e" />
<path d="M1297.00 138.90 L1301.00 143.10 L1305.00 138.90" fill="none" stroke="#6f6f78" stroke-width="1.3" stroke-linecap="round" stroke-linejoin="round"/>
<circle cx="1323.00" cy="138.50" r="3.6" fill="none" stroke="#585861" stroke-width="1.2"/>
<circle cx="1320.00" cy="143.30" r="3.6" fill="none" stroke="#585861" stroke-width="1.2"/>
<circle cx="1326.00" cy="143.30" r="3.6" fill="none" stroke="#585861" stroke-width="1.2"/>
<path d="M1339.50 138.90 L1343.50 143.10 L1347.50 138.90" fill="none" stroke="#6f6f78" stroke-width="1.3" stroke-linecap="round" stroke-linejoin="round"/>
<rect x="1358.50" y="134.80" width="13.50" height="11.50" fill="none" stroke="#585861" stroke-width="1.1" />
<path d="M1363.0 134.8 v11.5 M1367.5 134.8 v11.5 M1358.5 138.6 h13.5 M1358.5 142.4 h13.5" fill="none" stroke="#585861" stroke-width="1" />
<path d="M1382.00 138.75 L1386.50 143.25 L1391.00 138.75" fill="none" stroke="#6f6f78" stroke-width="1.3" stroke-linecap="round" stroke-linejoin="round"/>
<line x1="1400.40" y1="131.00" x2="1400.40" y2="151.00" stroke="#16161a" stroke-width="1.6" />
<rect x="1407.00" y="136.30" width="16.50" height="9.50" fill="none" rx="1" stroke="#585861" stroke-width="1.3" />
<line x1="1433.00" y1="131.00" x2="1433.00" y2="151.00" stroke="#16161a" stroke-width="1.6" />
<circle cx="1443.70" cy="140.60" r="1.5" fill="#7d7d86"/>
<circle cx="1450.00" cy="140.60" r="1.5" fill="#7d7d86"/>
<circle cx="1456.30" cy="140.60" r="1.5" fill="#7d7d86"/>
<line x1="1467.60" y1="131.00" x2="1467.60" y2="151.00" stroke="#16161a" stroke-width="1.6" />
<text x="1474.80" y="144.49" font-size="10.8" fill="#efeff2" font-weight="bold" textLength="49.0" lengthAdjust="spacingAndGlyphs" >Inspector</text>
<line x1="1816.50" y1="131.00" x2="1816.50" y2="151.00" stroke="#16161a" stroke-width="1.6" />
<circle cx="1827.20" cy="140.60" r="1.5" fill="#7d7d86"/>
<circle cx="1833.50" cy="140.60" r="1.5" fill="#7d7d86"/>
<circle cx="1839.80" cy="140.60" r="1.5" fill="#7d7d86"/>
<rect x="112.50" y="152.40" width="256.00" height="452.60" fill="#28272f" />
<rect x="112.50" y="152.40" width="11.00" height="452.60" fill="#1c1b21" />
<rect x="123.50" y="594.00" width="235.50" height="2.60" fill="#1e1d23" />
<rect x="123.50" y="596.60" width="245.00" height="8.40" fill="#25242b" />
<rect x="359.50" y="152.40" width="9.00" height="452.60" fill="#222128" />
<rect x="360.50" y="154.00" width="5.00" height="130.00" fill="#585c68" rx="2.5" />
<rect x="157.50" y="164.50" width="64.80" height="36.40" fill="#16161b" rx="1.5" />
<rect x="258.00" y="164.50" width="64.80" height="36.40" fill="#16161b" rx="1.5" />
<rect x="157.50" y="230.00" width="64.80" height="36.40" fill="#16161b" rx="1.5" />
<rect x="258.00" y="230.00" width="64.80" height="36.40" fill="#16161b" rx="1.5" />
<rect x="157.50" y="295.50" width="64.80" height="36.40" fill="#16161b" rx="1.5" />
<rect x="258.00" y="295.50" width="64.80" height="36.40" fill="#16161b" rx="1.5" />
<rect x="157.50" y="361.20" width="64.80" height="36.40" fill="#16161b" rx="1.5" />
<rect x="258.00" y="361.20" width="64.80" height="36.40" fill="#16161b" rx="1.5" />
<rect x="157.50" y="426.80" width="64.80" height="36.40" fill="#16161b" rx="1.5" />
<rect x="258.00" y="426.80" width="64.80" height="36.40" fill="#16161b" rx="1.5" />
<rect x="157.50" y="492.50" width="64.80" height="36.40" fill="#16161b" rx="1.5" />
<rect x="258.00" y="492.50" width="64.80" height="36.40" fill="#16161b" rx="1.5" />
<rect x="157.50" y="558.50" width="64.80" height="36.40" fill="#16161b" rx="1.5" />
<rect x="258.00" y="558.50" width="64.80" height="36.40" fill="#16161b" rx="1.5" />
<g filter="url(#b06)"><rect x="158.70" y="165.70" width="62.40" height="34.00" fill="#9a948b" />
<rect x="166.70" y="165.70" width="20.13" height="18.00" fill="#d8d6d0" />
<rect x="192.70" y="165.70" width="22.14" height="18.00" fill="#d4d2cc" />
<rect x="158.70" y="187.70" width="62.40" height="12.00" fill="#8e887f" />
<rect x="186.70" y="165.70" width="6.04" height="34.00" fill="#8a847c" />
<rect x="259.20" y="165.70" width="62.40" height="34.00" fill="#9a948b" />
<rect x="265.20" y="165.70" width="22.14" height="17.00" fill="#d6d4ce" />
<rect x="293.20" y="165.70" width="22.14" height="17.00" fill="#d8d6d0" />
<rect x="259.20" y="187.70" width="62.40" height="12.00" fill="#8f8980" />
<rect x="271.20" y="176.70" width="4.03" height="4.00" fill="#c08a40" />
<rect x="311.20" y="173.70" width="3.02" height="4.00" fill="#c08a40" />
<rect x="158.70" y="231.20" width="62.40" height="34.00" fill="#938d84" />
<rect x="172.70" y="231.20" width="42.27" height="14.00" fill="#cfcdc6" />
<rect x="158.70" y="251.20" width="62.40" height="14.00" fill="#8a847b" />
<rect x="182.70" y="246.20" width="4.03" height="4.00" fill="#c08a40" />
<rect x="259.20" y="231.20" width="62.40" height="34.00" fill="#8f8a82" />
<rect x="285.20" y="231.20" width="32.21" height="16.00" fill="#d0cec8" />
<rect x="259.20" y="253.20" width="62.40" height="12.00" fill="#857f77" />
<rect x="263.20" y="237.20" width="4.03" height="16.00" fill="#5f5a55" />
<rect x="158.70" y="296.70" width="62.40" height="34.00" fill="#aaa59d" />
<rect x="176.70" y="299.70" width="16.10" height="28.00" fill="#4e4843" />
<rect x="158.70" y="296.70" width="6.04" height="34.00" fill="#d0cec8" />
<rect x="208.70" y="296.70" width="12.08" height="30.00" fill="#cfcdc6" />
<rect x="259.20" y="296.70" width="62.40" height="34.00" fill="#9b958b" />
<rect x="158.70" y="362.40" width="62.40" height="34.00" fill="#999389" />
<rect x="170.70" y="362.40" width="40.26" height="18.00" fill="#c8c5bd" />
<rect x="172.70" y="380.40" width="34.22" height="16.00" fill="#8b857c" />
<rect x="259.20" y="362.40" width="62.40" height="34.00" fill="#958f86" />
<rect x="295.20" y="362.40" width="22.14" height="20.00" fill="#cac7c0" />
<rect x="259.20" y="362.40" width="10.06" height="34.00" fill="#a8a39a" />
<rect x="158.70" y="428.00" width="62.40" height="34.00" fill="#9c968d" />
<rect x="190.70" y="428.00" width="30.19" height="20.00" fill="#dddbd6" />
<rect x="158.70" y="450.00" width="62.40" height="12.00" fill="#8c867d" />
<rect x="259.20" y="428.00" width="62.40" height="34.00" fill="#9a948c" />
<rect x="267.20" y="428.00" width="14.09" height="18.00" fill="#d8d6d0" />
<rect x="283.20" y="438.00" width="20.13" height="20.00" fill="#7f93ad" />
<rect x="309.20" y="432.00" width="12.08" height="22.00" fill="#c8c6c0" />
<rect x="158.70" y="493.70" width="62.40" height="34.00" fill="#bdb9b2" />
<rect x="158.70" y="493.70" width="30.19" height="12.00" fill="#dad8d3" />
<rect x="166.70" y="506.70" width="22.14" height="21.00" fill="#5e5852" />
<rect x="192.70" y="493.70" width="6.04" height="24.00" fill="#e2e0dc" />
<rect x="202.70" y="493.70" width="14.09" height="20.00" fill="#cfccc6" />
<rect x="259.20" y="493.70" width="62.40" height="34.00" fill="#b5b0a8" />
<rect x="269.20" y="493.70" width="40.26" height="16.00" fill="#e0deda" />
<rect x="293.20" y="505.70" width="12.08" height="22.00" fill="#4d4844" />
<rect x="158.70" y="559.70" width="62.40" height="34.00" fill="#b5b0a8" />
<rect x="162.70" y="559.70" width="12.08" height="34.00" fill="#dcdad5" />
<rect x="192.70" y="559.70" width="14.09" height="34.00" fill="#d8d6d1" />
<rect x="182.70" y="559.70" width="8.05" height="34.00" fill="#9d978e" />
<rect x="259.20" y="559.70" width="62.40" height="34.00" fill="#a9a49b" />
<rect x="267.20" y="559.70" width="32.21" height="16.00" fill="#dcdad5" />
<rect x="307.20" y="561.70" width="12.08" height="14.00" fill="#d0cec9" />
<rect x="259.20" y="581.70" width="62.40" height="12.00" fill="#8d877e" />
</g>
<g fill="#f6f6f6" stroke="#f6f6f6"><ellipse cx="167.7" cy="192.9" rx="2" ry="1.5" stroke="none"/>
<ellipse cx="173.5" cy="191.1" rx="2" ry="1.5" stroke="none"/>
<path d="M169.3 192.9 v-6.6 l5.8 -1.8 v6.6" fill="none" stroke-width="1.1"/>
<path d="M169.3 186.5 l5.8 -1.8" fill="none" stroke-width="2.2"/>
</g>
<text x="189.90" y="214.10" font-size="10" fill="#787884" text-anchor="middle" textLength="52.5" lengthAdjust="spacingAndGlyphs" >C6322.MP4</text>
<g fill="#f6f6f6" stroke="#f6f6f6"><ellipse cx="268.2" cy="192.9" rx="2" ry="1.5" stroke="none"/>
<ellipse cx="274.0" cy="191.1" rx="2" ry="1.5" stroke="none"/>
<path d="M269.8 192.9 v-6.6 l5.8 -1.8 v6.6" fill="none" stroke-width="1.1"/>
<path d="M269.8 186.5 l5.8 -1.8" fill="none" stroke-width="2.2"/>
</g>
<text x="290.40" y="214.10" font-size="10" fill="#787884" text-anchor="middle" textLength="52.5" lengthAdjust="spacingAndGlyphs" >C6326.MP4</text>
<g fill="#f6f6f6" stroke="#f6f6f6"><ellipse cx="167.7" cy="258.4" rx="2" ry="1.5" stroke="none"/>
<ellipse cx="173.5" cy="256.6" rx="2" ry="1.5" stroke="none"/>
<path d="M169.3 258.4 v-6.6 l5.8 -1.8 v6.6" fill="none" stroke-width="1.1"/>
<path d="M169.3 252.0 l5.8 -1.8" fill="none" stroke-width="2.2"/>
</g>
<text x="189.90" y="279.60" font-size="10" fill="#787884" text-anchor="middle" textLength="52.5" lengthAdjust="spacingAndGlyphs" >C6332.MP4</text>
<g fill="#f6f6f6" stroke="#f6f6f6"><ellipse cx="268.2" cy="258.4" rx="2" ry="1.5" stroke="none"/>
<ellipse cx="274.0" cy="256.6" rx="2" ry="1.5" stroke="none"/>
<path d="M269.8 258.4 v-6.6 l5.8 -1.8 v6.6" fill="none" stroke-width="1.1"/>
<path d="M269.8 252.0 l5.8 -1.8" fill="none" stroke-width="2.2"/>
</g>
<text x="290.40" y="279.60" font-size="10" fill="#787884" text-anchor="middle" textLength="52.5" lengthAdjust="spacingAndGlyphs" >C6338.MP4</text>
<g fill="#f6f6f6" stroke="#f6f6f6"><ellipse cx="167.7" cy="323.9" rx="2" ry="1.5" stroke="none"/>
<ellipse cx="173.5" cy="322.1" rx="2" ry="1.5" stroke="none"/>
<path d="M169.3 323.9 v-6.6 l5.8 -1.8 v6.6" fill="none" stroke-width="1.1"/>
<path d="M169.3 317.5 l5.8 -1.8" fill="none" stroke-width="2.2"/>
</g>
<text x="189.90" y="345.10" font-size="10" fill="#787884" text-anchor="middle" textLength="52.5" lengthAdjust="spacingAndGlyphs" >C6340.MP4</text>
<g fill="#f6f6f6" stroke="#f6f6f6"><ellipse cx="268.2" cy="323.9" rx="2" ry="1.5" stroke="none"/>
<ellipse cx="274.0" cy="322.1" rx="2" ry="1.5" stroke="none"/>
<path d="M269.8 323.9 v-6.6 l5.8 -1.8 v6.6" fill="none" stroke-width="1.1"/>
<path d="M269.8 317.5 l5.8 -1.8" fill="none" stroke-width="2.2"/>
</g>
<text x="290.40" y="345.10" font-size="10" fill="#787884" text-anchor="middle" textLength="52.5" lengthAdjust="spacingAndGlyphs" >C6345.MP4</text>
<g fill="#f6f6f6" stroke="#f6f6f6"><ellipse cx="167.7" cy="389.6" rx="2" ry="1.5" stroke="none"/>
<ellipse cx="173.5" cy="387.8" rx="2" ry="1.5" stroke="none"/>
<path d="M169.3 389.6 v-6.6 l5.8 -1.8 v6.6" fill="none" stroke-width="1.1"/>
<path d="M169.3 383.2 l5.8 -1.8" fill="none" stroke-width="2.2"/>
</g>
<text x="189.90" y="410.80" font-size="10" fill="#787884" text-anchor="middle" textLength="52.5" lengthAdjust="spacingAndGlyphs" >C6346.MP4</text>
<g fill="#f6f6f6" stroke="#f6f6f6"><ellipse cx="268.2" cy="389.6" rx="2" ry="1.5" stroke="none"/>
<ellipse cx="274.0" cy="387.8" rx="2" ry="1.5" stroke="none"/>
<path d="M269.8 389.6 v-6.6 l5.8 -1.8 v6.6" fill="none" stroke-width="1.1"/>
<path d="M269.8 383.2 l5.8 -1.8" fill="none" stroke-width="2.2"/>
</g>
<text x="290.40" y="410.80" font-size="10" fill="#787884" text-anchor="middle" textLength="52.5" lengthAdjust="spacingAndGlyphs" >C6347.MP4</text>
<g fill="#f6f6f6" stroke="#f6f6f6"><ellipse cx="167.7" cy="455.2" rx="2" ry="1.5" stroke="none"/>
<ellipse cx="173.5" cy="453.4" rx="2" ry="1.5" stroke="none"/>
<path d="M169.3 455.2 v-6.6 l5.8 -1.8 v6.6" fill="none" stroke-width="1.1"/>
<path d="M169.3 448.8 l5.8 -1.8" fill="none" stroke-width="2.2"/>
</g>
<text x="189.90" y="476.40" font-size="10" fill="#787884" text-anchor="middle" textLength="52.5" lengthAdjust="spacingAndGlyphs" >C6349.MP4</text>
<g fill="#f6f6f6" stroke="#f6f6f6"><ellipse cx="268.2" cy="455.2" rx="2" ry="1.5" stroke="none"/>
<ellipse cx="274.0" cy="453.4" rx="2" ry="1.5" stroke="none"/>
<path d="M269.8 455.2 v-6.6 l5.8 -1.8 v6.6" fill="none" stroke-width="1.1"/>
<path d="M269.8 448.8 l5.8 -1.8" fill="none" stroke-width="2.2"/>
</g>
<text x="290.40" y="476.40" font-size="10" fill="#787884" text-anchor="middle" textLength="52.5" lengthAdjust="spacingAndGlyphs" >C6351.MP4</text>
<g fill="#f6f6f6" stroke="#f6f6f6"><ellipse cx="167.7" cy="520.9" rx="2" ry="1.5" stroke="none"/>
<ellipse cx="173.5" cy="519.1" rx="2" ry="1.5" stroke="none"/>
<path d="M169.3 520.9 v-6.6 l5.8 -1.8 v6.6" fill="none" stroke-width="1.1"/>
<path d="M169.3 514.5 l5.8 -1.8" fill="none" stroke-width="2.2"/>
</g>
<text x="189.90" y="542.10" font-size="10" fill="#787884" text-anchor="middle" textLength="52.5" lengthAdjust="spacingAndGlyphs" >C6352.MP4</text>
<g fill="#f6f6f6" stroke="#f6f6f6"><ellipse cx="268.2" cy="520.9" rx="2" ry="1.5" stroke="none"/>
<ellipse cx="274.0" cy="519.1" rx="2" ry="1.5" stroke="none"/>
<path d="M269.8 520.9 v-6.6 l5.8 -1.8 v6.6" fill="none" stroke-width="1.1"/>
<path d="M269.8 514.5 l5.8 -1.8" fill="none" stroke-width="2.2"/>
</g>
<text x="290.40" y="542.10" font-size="10" fill="#787884" text-anchor="middle" textLength="52.5" lengthAdjust="spacingAndGlyphs" >C6354.MP4</text>
<g fill="#f6f6f6" stroke="#f6f6f6"><ellipse cx="167.7" cy="586.9" rx="2" ry="1.5" stroke="none"/>
<ellipse cx="173.5" cy="585.1" rx="2" ry="1.5" stroke="none"/>
<path d="M169.3 586.9 v-6.6 l5.8 -1.8 v6.6" fill="none" stroke-width="1.1"/>
<path d="M169.3 580.5 l5.8 -1.8" fill="none" stroke-width="2.2"/>
</g>
<g fill="#f6f6f6" stroke="#f6f6f6"><ellipse cx="268.2" cy="586.9" rx="2" ry="1.5" stroke="none"/>
<ellipse cx="274.0" cy="585.1" rx="2" ry="1.5" stroke="none"/>
<path d="M269.8 586.9 v-6.6 l5.8 -1.8 v6.6" fill="none" stroke-width="1.1"/>
<path d="M269.8 580.5 l5.8 -1.8" fill="none" stroke-width="2.2"/>
</g>
<rect x="368.50" y="152.40" width="1099.00" height="376.50" fill="#161616" />
<use href="#pic" transform="translate(370 178.2)"/>
<use href="#pic" transform="translate(947.2 193.8) scale(0.9008 0.9043)"/>
<line x1="946.60" y1="152.40" x2="946.60" y2="193.50" stroke="#1e1e1e" stroke-width="1" />
<text x="946.00" y="174.19" font-size="10.8" fill="#a9a9a9" text-anchor="end" textLength="102.0" lengthAdjust="spacingAndGlyphs" >1920x1080xfloat32</text>
<text x="1466.50" y="190.19" font-size="10.8" fill="#a9a9a9" text-anchor="end" textLength="102.0" lengthAdjust="spacingAndGlyphs" >1920x1080xfloat32</text>
<rect x="368.50" y="528.80" width="1099.00" height="31.00" fill="#212126" />
<line x1="368.50" y1="529.00" x2="1467.50" y2="529.00" stroke="#101012" stroke-width="1" />
<rect x="368.50" y="559.50" width="1099.00" height="46.00" fill="#222227" />
<line x1="374.30" y1="533.50" x2="374.30" y2="550.50" stroke="#3e3e44" stroke-width="1" />
<text x="376.90" y="547.60" font-size="8.6" fill="#5e5e64" >0</text>
<line x1="398.76" y1="533.50" x2="398.76" y2="550.50" stroke="#3e3e44" stroke-width="1" />
<text x="401.36" y="547.60" font-size="8.6" fill="#5e5e64" >2</text>
<line x1="423.23" y1="533.50" x2="423.23" y2="550.50" stroke="#3e3e44" stroke-width="1" />
<text x="425.83" y="547.60" font-size="8.6" fill="#5e5e64" >4</text>
<line x1="447.69" y1="533.50" x2="447.69" y2="550.50" stroke="#3e3e44" stroke-width="1" />
<text x="450.29" y="547.60" font-size="8.6" fill="#5e5e64" >6</text>
<line x1="472.16" y1="533.50" x2="472.16" y2="550.50" stroke="#3e3e44" stroke-width="1" />
<text x="474.76" y="547.60" font-size="8.6" fill="#5e5e64" >8</text>
<line x1="496.62" y1="533.50" x2="496.62" y2="550.50" stroke="#3e3e44" stroke-width="1" />
<text x="499.22" y="547.60" font-size="8.6" fill="#5e5e64" >10</text>
<line x1="521.08" y1="533.50" x2="521.08" y2="550.50" stroke="#3e3e44" stroke-width="1" />
<text x="523.68" y="547.60" font-size="8.6" fill="#5e5e64" >12</text>
<line x1="545.55" y1="533.50" x2="545.55" y2="550.50" stroke="#3e3e44" stroke-width="1" />
<text x="548.15" y="547.60" font-size="8.6" fill="#5e5e64" >14</text>
<line x1="570.01" y1="533.50" x2="570.01" y2="550.50" stroke="#3e3e44" stroke-width="1" />
<text x="572.61" y="547.60" font-size="8.6" fill="#5e5e64" >16</text>
<line x1="594.48" y1="533.50" x2="594.48" y2="550.50" stroke="#3e3e44" stroke-width="1" />
<text x="597.08" y="547.60" font-size="8.6" fill="#5e5e64" >18</text>
<line x1="618.94" y1="533.50" x2="618.94" y2="550.50" stroke="#3e3e44" stroke-width="1" />
<text x="621.54" y="547.60" font-size="8.6" fill="#5e5e64" >20</text>
<line x1="643.40" y1="533.50" x2="643.40" y2="550.50" stroke="#3e3e44" stroke-width="1" />
<text x="646.00" y="547.60" font-size="8.6" fill="#5e5e64" >22</text>
<line x1="667.87" y1="533.50" x2="667.87" y2="550.50" stroke="#3e3e44" stroke-width="1" />
<text x="670.47" y="547.60" font-size="8.6" fill="#5e5e64" >24</text>
<line x1="692.33" y1="533.50" x2="692.33" y2="550.50" stroke="#3e3e44" stroke-width="1" />
<text x="694.93" y="547.60" font-size="8.6" fill="#5e5e64" >26</text>
<line x1="716.80" y1="533.50" x2="716.80" y2="550.50" stroke="#3e3e44" stroke-width="1" />
<text x="719.40" y="547.60" font-size="8.6" fill="#5e5e64" >28</text>
<line x1="741.26" y1="533.50" x2="741.26" y2="550.50" stroke="#3e3e44" stroke-width="1" />
<text x="743.86" y="547.60" font-size="8.6" fill="#5e5e64" >30</text>
<line x1="765.72" y1="533.50" x2="765.72" y2="550.50" stroke="#3e3e44" stroke-width="1" />
<text x="768.32" y="547.60" font-size="8.6" fill="#5e5e64" >32</text>
<line x1="790.19" y1="533.50" x2="790.19" y2="550.50" stroke="#3e3e44" stroke-width="1" />
<text x="792.79" y="547.60" font-size="8.6" fill="#5e5e64" >34</text>
<line x1="814.65" y1="533.50" x2="814.65" y2="550.50" stroke="#3e3e44" stroke-width="1" />
<text x="817.25" y="547.60" font-size="8.6" fill="#5e5e64" >36</text>
<line x1="839.12" y1="533.50" x2="839.12" y2="550.50" stroke="#3e3e44" stroke-width="1" />
<text x="841.72" y="547.60" font-size="8.6" fill="#5e5e64" >38</text>
<line x1="863.58" y1="533.50" x2="863.58" y2="550.50" stroke="#3e3e44" stroke-width="1" />
<text x="866.18" y="547.60" font-size="8.6" fill="#5e5e64" >40</text>
<line x1="888.04" y1="533.50" x2="888.04" y2="550.50" stroke="#3e3e44" stroke-width="1" />
<text x="890.64" y="547.60" font-size="8.6" fill="#5e5e64" >42</text>
<line x1="912.51" y1="533.50" x2="912.51" y2="550.50" stroke="#3e3e44" stroke-width="1" />
<text x="915.11" y="547.60" font-size="8.6" fill="#5e5e64" >44</text>
<line x1="936.97" y1="533.50" x2="936.97" y2="550.50" stroke="#3e3e44" stroke-width="1" />
<text x="939.57" y="547.60" font-size="8.6" fill="#5e5e64" >46</text>
<line x1="961.44" y1="533.50" x2="961.44" y2="550.50" stroke="#3e3e44" stroke-width="1" />
<text x="964.04" y="547.60" font-size="8.6" fill="#5e5e64" >48</text>
<line x1="985.90" y1="533.50" x2="985.90" y2="550.50" stroke="#3e3e44" stroke-width="1" />
<text x="988.50" y="547.60" font-size="8.6" fill="#5e5e64" >50</text>
<line x1="1010.36" y1="533.50" x2="1010.36" y2="550.50" stroke="#3e3e44" stroke-width="1" />
<text x="1012.96" y="547.60" font-size="8.6" fill="#5e5e64" >52</text>
<line x1="1034.83" y1="533.50" x2="1034.83" y2="550.50" stroke="#3e3e44" stroke-width="1" />
<text x="1037.43" y="547.60" font-size="8.6" fill="#5e5e64" >54</text>
<line x1="1059.29" y1="533.50" x2="1059.29" y2="550.50" stroke="#3e3e44" stroke-width="1" />
<text x="1061.89" y="547.60" font-size="8.6" fill="#5e5e64" >56</text>
<line x1="1083.76" y1="533.50" x2="1083.76" y2="550.50" stroke="#3e3e44" stroke-width="1" />
<text x="1086.36" y="547.60" font-size="8.6" fill="#5e5e64" >58</text>
<line x1="1108.22" y1="533.50" x2="1108.22" y2="550.50" stroke="#3e3e44" stroke-width="1" />
<text x="1110.82" y="547.60" font-size="8.6" fill="#5e5e64" >60</text>
<line x1="1132.68" y1="533.50" x2="1132.68" y2="550.50" stroke="#3e3e44" stroke-width="1" />
<text x="1135.28" y="547.60" font-size="8.6" fill="#5e5e64" >62</text>
<line x1="1157.15" y1="533.50" x2="1157.15" y2="550.50" stroke="#3e3e44" stroke-width="1" />
<text x="1159.75" y="547.60" font-size="8.6" fill="#5e5e64" >64</text>
<line x1="1181.61" y1="533.50" x2="1181.61" y2="550.50" stroke="#3e3e44" stroke-width="1" />
<text x="1184.21" y="547.60" font-size="8.6" fill="#5e5e64" >66</text>
<line x1="1206.08" y1="533.50" x2="1206.08" y2="550.50" stroke="#3e3e44" stroke-width="1" />
<text x="1208.68" y="547.60" font-size="8.6" fill="#5e5e64" >68</text>
<line x1="1230.54" y1="533.50" x2="1230.54" y2="550.50" stroke="#3e3e44" stroke-width="1" />
<text x="1233.14" y="547.60" font-size="8.6" fill="#5e5e64" >70</text>
<line x1="1255.00" y1="533.50" x2="1255.00" y2="550.50" stroke="#3e3e44" stroke-width="1" />
<text x="1257.60" y="547.60" font-size="8.6" fill="#5e5e64" >72</text>
<line x1="1279.47" y1="533.50" x2="1279.47" y2="550.50" stroke="#3e3e44" stroke-width="1" />
<text x="1282.07" y="547.60" font-size="8.6" fill="#5e5e64" >74</text>
<line x1="1303.93" y1="533.50" x2="1303.93" y2="550.50" stroke="#3e3e44" stroke-width="1" />
<text x="1306.53" y="547.60" font-size="8.6" fill="#5e5e64" >76</text>
<line x1="1328.40" y1="533.50" x2="1328.40" y2="550.50" stroke="#3e3e44" stroke-width="1" />
<text x="1331.00" y="547.60" font-size="8.6" fill="#5e5e64" >78</text>
<line x1="1352.86" y1="533.50" x2="1352.86" y2="550.50" stroke="#3e3e44" stroke-width="1" />
<text x="1355.46" y="547.60" font-size="8.6" fill="#5e5e64" >80</text>
<line x1="1377.32" y1="533.50" x2="1377.32" y2="550.50" stroke="#3e3e44" stroke-width="1" />
<text x="1379.92" y="547.60" font-size="8.6" fill="#5e5e64" >82</text>
<line x1="1401.79" y1="533.50" x2="1401.79" y2="550.50" stroke="#3e3e44" stroke-width="1" />
<text x="1404.39" y="547.60" font-size="8.6" fill="#5e5e64" >84</text>
<line x1="1426.25" y1="533.50" x2="1426.25" y2="550.50" stroke="#3e3e44" stroke-width="1" />
<text x="1428.85" y="547.60" font-size="8.6" fill="#5e5e64" >86</text>
<line x1="1450.72" y1="533.50" x2="1450.72" y2="550.50" stroke="#3e3e44" stroke-width="1" />
<text x="1453.32" y="547.60" font-size="8.6" fill="#5e5e64" >88</text>
<rect x="371.00" y="531.00" width="2.50" height="27.50" fill="#c9a227" />
<rect x="1463.00" y="531.00" width="2.50" height="27.50" fill="#c9a227" />
<line x1="838.52" y1="531.00" x2="838.52" y2="558.50" stroke="#d8382f" stroke-width="1.3" />
<rect x="838.52" y="557.60" width="13.00" height="1.80" fill="#2e9b4e" />
<rect x="373.00" y="566.40" width="1090.00" height="7.60" fill="#585f66" rx="3.8" />
<rect x="387.00" y="582.00" width="45.70" height="18.00" fill="#1c1c1f" rx="2" />
<text x="409.80" y="595.07" font-size="11.3" fill="#e2e2e4" text-anchor="middle" >0.0</text>
<rect x="442.00" y="582.00" width="45.70" height="18.00" fill="#1c1c1f" rx="2" />
<text x="464.80" y="595.07" font-size="11.3" fill="#e2e2e4" text-anchor="middle" >88.0</text>
<path d="M500 589 h3.5 l4.5 -4 v12 l-4.5 -4 h-3.5 z" fill="none" stroke="#e8e8e8" stroke-width="1.4" stroke-linejoin="round"/>
<path d="M511.5 588 q2 3 0 6 M514 586 q3.4 5 0 10" fill="none" stroke="#e8e8e8" stroke-width="1.2" />
<rect x="832.00" y="585.20" width="2.20" height="11.60" fill="#acacb0" />
<path d="M842.5 585.2 v11.6 l-7.8 -5.8 z M851.3 585.2 v11.6 l-7.8 -5.8 z" fill="#acacb0" />
<path d="M876.5 585.2 v11.6 l-9.8 -5.8 z" fill="#acacb0" />
<rect x="893.60" y="585.20" width="12.00" height="11.60" fill="#acacb0" />
<path d="M923.4 585.2 v11.6 l9.8 -5.8 z" fill="#acacb0" />
<path d="M949.2 585.2 v11.6 l7.8 -5.8 z M958 585.2 v11.6 l7.8 -5.8 z" fill="#acacb0" />
<rect x="966.40" y="585.20" width="2.20" height="11.60" fill="#acacb0" />
<path d="M991.5 587.4 h-3 a4.5 4.5 0 0 0 0 9 h10.5 a4.5 4.5 0 0 0 0 -9 h-2 M992.6 584 l3.4 3.4 l-3.4 3.4" fill="none" stroke="#e8402f" stroke-width="1.9" stroke-linecap="round" stroke-linejoin="round"/>
<rect x="1387.70" y="581.00" width="59.80" height="18.50" fill="#1c1c1f" rx="2" />
<text x="1416.50" y="595.52" font-size="14.5" fill="#eeeeee" text-anchor="middle" >38.0</text>
<line x1="368.50" y1="605.40" x2="1467.50" y2="605.40" stroke="#131316" stroke-width="1.4" />
<rect x="112.50" y="606.00" width="1355.00" height="46.50" fill="#222227" />
<line x1="112.50" y1="652.80" x2="1467.50" y2="652.80" stroke="#121215" stroke-width="1.6" />
<rect x="200.00" y="623.50" width="19.00" height="13.00" fill="#3a3a40" stroke="#4a4a50" stroke-width="1" />
<path d="M201 636 l17 -8 v8 z" fill="#2c2c31" />
<rect x="238.00" y="623.50" width="8.00" height="7.00" fill="#4a4a50" />
<rect x="247.00" y="623.50" width="8.00" height="7.00" fill="#3d3d43" />
<rect x="240.00" y="631.50" width="12.00" height="5.00" fill="#3a3a40" />
<rect x="274.50" y="622.00" width="16.00" height="15.00" fill="#303036" rx="2" />
<text x="282.5" y="634.5" font-size="13" font-weight="bold" fill="#8a8a90" text-anchor="middle" class="sf">T</text>
<path d="M311 637 q5 -1 7 -6 l7 -10" fill="none" stroke="#8d8d92" stroke-width="2.2" stroke-linecap="round"/>
<path d="M310 638 q4 0 6 -4" fill="none" stroke="#55555a" stroke-width="3" />
<line x1="341.60" y1="616.00" x2="341.60" y2="642.00" stroke="#2c2c32" stroke-width="1.2" />
<circle cx="370.00" cy="629.50" r="1.1" fill="#6a6a70"/>
<circle cx="368.24" cy="633.74" r="1.1" fill="#6a6a70"/>
<circle cx="364.00" cy="635.50" r="1.1" fill="#6a6a70"/>
<circle cx="359.76" cy="633.74" r="1.1" fill="#6a6a70"/>
<circle cx="358.00" cy="629.50" r="1.1" fill="#6a6a70"/>
<circle cx="359.76" cy="625.26" r="1.1" fill="#6a6a70"/>
<circle cx="364.00" cy="623.50" r="1.1" fill="#6a6a70"/>
<circle cx="368.24" cy="625.26" r="1.1" fill="#6a6a70"/>
<path d="M394 636 q7 0 7.5 -6.5 t7.5 -6.5" fill="none" stroke="#4a4a50" stroke-width="1.5" />
<line x1="394.00" y1="636.00" x2="409.00" y2="623.00" stroke="#3a3a40" stroke-width="1" />
<path d="M431 636 q10 -1 14 -13" fill="none" stroke="#4a4a50" stroke-width="1.5" />
<line x1="431.00" y1="636.00" x2="446.00" y2="623.00" stroke="#3a3a40" stroke-width="1" />
<circle cx="475.30" cy="629.50" r="3.6" fill="#55555a"/>
<line x1="480.90" y1="629.50" x2="483.30" y2="629.50" stroke="#55555a" stroke-width="1.2" />
<line x1="479.26" y1="633.46" x2="480.96" y2="635.16" stroke="#55555a" stroke-width="1.2" />
<line x1="475.30" y1="635.10" x2="475.30" y2="637.50" stroke="#55555a" stroke-width="1.2" />
<line x1="471.34" y1="633.46" x2="469.64" y2="635.16" stroke="#55555a" stroke-width="1.2" />
<line x1="469.70" y1="629.50" x2="467.30" y2="629.50" stroke="#55555a" stroke-width="1.2" />
<line x1="471.34" y1="625.54" x2="469.64" y2="623.84" stroke="#55555a" stroke-width="1.2" />
<line x1="475.30" y1="623.90" x2="475.30" y2="621.50" stroke="#55555a" stroke-width="1.2" />
<line x1="479.26" y1="625.54" x2="480.96" y2="623.84" stroke="#55555a" stroke-width="1.2" />
<path d="M510.8 621.5 q6 8 4.6 11.5 a4.8 4.8 0 0 1 -9.2 0 q-1.4 -3.5 4.6 -11.5 z" fill="#98989c" />
<circle cx="510.80" cy="632.00" r="1.6" fill="#222227"/>
<line x1="534.00" y1="616.00" x2="534.00" y2="642.00" stroke="#2c2c32" stroke-width="1.2" />
<rect x="549.00" y="622.50" width="17.00" height="13.00" fill="none" stroke="#4a4a50" stroke-width="1.2" />
<path d="M545 629 h8 M550 626 l3 3 l-3 3" fill="none" stroke="#4a4a50" stroke-width="1.2" />
<rect x="552.00" y="625.50" width="11.00" height="7.00" fill="#35353b" />
<rect x="585.00" y="621.50" width="12.00" height="10.00" fill="none" stroke="#4a4a50" stroke-width="1.2" />
<rect x="589.00" y="626.00" width="12.00" height="10.00" fill="#2d2d33" stroke="#4a4a50" stroke-width="1.2" />
<rect x="620.00" y="622.00" width="18.00" height="13.00" fill="#55555b" />
<circle cx="630.50" cy="628.00" r="3.6" fill="#1a1a1e"/>
<rect x="622.00" y="637.00" width="5.00" height="1.60" fill="#6a6a70" />
<rect x="629.00" y="637.00" width="9.00" height="1.60" fill="#3a3a40" />
<rect x="657.00" y="628.00" width="9.00" height="7.00" fill="none" stroke="#4a4a50" stroke-width="1.2" />
<rect x="667.00" y="623.00" width="8.00" height="6.00" fill="none" stroke="#4a4a50" stroke-width="1.2" />
<rect x="695.00" y="623.50" width="17.00" height="11.00" fill="#303036" stroke="#4a4a50" stroke-width="1.2" />
<path d="M692 632 l3 3 M714 626 l-3 -3" fill="none" stroke="#4a4a50" stroke-width="1.2" />
<line x1="725.80" y1="616.00" x2="725.80" y2="642.00" stroke="#2c2c32" stroke-width="1.2" />
<rect x="743.00" y="623.00" width="13.50" height="13.50" fill="none" stroke="#4a4a50" stroke-width="1.3" />
<rect x="741.70" y="621.70" width="2.60" height="2.60" fill="#5a5a60" />
<rect x="755.20" y="621.70" width="2.60" height="2.60" fill="#5a5a60" />
<rect x="741.70" y="635.20" width="2.60" height="2.60" fill="#5a5a60" />
<rect x="755.20" y="635.20" width="2.60" height="2.60" fill="#5a5a60" />
<circle cx="786.40" cy="630.00" r="6.6" fill="none" stroke="#4a4a50" stroke-width="1.3"/>
<rect x="785.10" y="622.10" width="2.60" height="2.60" fill="#5a5a60" />
<rect x="791.70" y="628.70" width="2.60" height="2.60" fill="#5a5a60" />
<rect x="785.10" y="635.30" width="2.60" height="2.60" fill="#5a5a60" />
<rect x="778.50" y="628.70" width="2.60" height="2.60" fill="#5a5a60" />
<path d="M814 633 l6 -10 l8 5 M820 623 l2 14" fill="none" stroke="#5a5a60" stroke-width="1.3" />
<circle cx="820.00" cy="623.00" r="1.4" fill="#77777c"/>
<path d="M849 635 q9.5 -14 19 0" fill="none" stroke="#5a5a60" stroke-width="1.5" />
<circle cx="852.00" cy="626.00" r="1.3" fill="#77777c"/>
<circle cx="865.00" cy="626.00" r="1.3" fill="#77777c"/>
<line x1="881.70" y1="616.00" x2="881.70" y2="642.00" stroke="#2c2c32" stroke-width="1.2" />
<path d="M898 636.5 l14 -12" fill="none" stroke="#4a4a50" stroke-width="1.6" />
<circle cx="904.00" cy="623.50" r="1.1" fill="#5c5c62"/>
<circle cx="909.00" cy="627.50" r="1.1" fill="#5c5c62"/>
<circle cx="912.00" cy="622.50" r="1.1" fill="#5c5c62"/>
<circle cx="900.00" cy="628.50" r="1.1" fill="#5c5c62"/>
<circle cx="911.00" cy="632.50" r="1.1" fill="#5c5c62"/>
<circle cx="907.00" cy="620.50" r="1.1" fill="#5c5c62"/>
<path d="M932.9 636.5 l14 -12" fill="none" stroke="#4a4a50" stroke-width="1.6" />
<circle cx="938.90" cy="623.50" r="1.1" fill="#5c5c62"/>
<circle cx="943.90" cy="627.50" r="1.1" fill="#5c5c62"/>
<circle cx="946.90" cy="622.50" r="1.1" fill="#5c5c62"/>
<circle cx="934.90" cy="628.50" r="1.1" fill="#5c5c62"/>
<circle cx="945.90" cy="632.50" r="1.1" fill="#5c5c62"/>
<circle cx="941.90" cy="620.50" r="1.1" fill="#5c5c62"/>
<path d="M969.5 636.5 l14 -12" fill="none" stroke="#4a4a50" stroke-width="1.6" />
<circle cx="975.50" cy="623.50" r="1.1" fill="#5c5c62"/>
<circle cx="980.50" cy="627.50" r="1.1" fill="#5c5c62"/>
<circle cx="983.50" cy="622.50" r="1.1" fill="#5c5c62"/>
<circle cx="971.50" cy="628.50" r="1.1" fill="#5c5c62"/>
<circle cx="982.50" cy="632.50" r="1.1" fill="#5c5c62"/>
<circle cx="978.50" cy="620.50" r="1.1" fill="#5c5c62"/>
<line x1="1000.60" y1="616.00" x2="1000.60" y2="642.00" stroke="#2c2c32" stroke-width="1.2" />
<path d="M1015 633 l5 -9 l11 -2 l-3 10 z" fill="#67676d" />
<path d="M1012 635 l14 3 l8 -4" fill="none" stroke="#4a4a50" stroke-width="1.2" />
<path d="M1053 634 l4 -11 l5 9 z" fill="#77777c" />
<circle cx="1065.00" cy="630.00" r="4.6" fill="#67676d"/>
<circle cx="1059.00" cy="634.00" r="3.6" fill="#8a8a90"/>
<text x="1098" y="632" font-size="14" font-weight="bold" fill="#8a8a90" text-anchor="middle" class="sf">T</text>
<path d="M1086 633 l10 4 l10 -4" fill="none" stroke="#4a4a50" stroke-width="1.2" />
<circle cx="1136.00" cy="628.50" r="4.6" fill="#8d8d92"/>
<path d="M1124 628 l5 3 M1124 634 l12 2 l8 -3" fill="none" stroke="#4a4a50" stroke-width="1.2" />
<rect x="1161.00" y="623.00" width="11.00" height="10.00" fill="none" stroke="#4a4a50" stroke-width="1.2" />
<rect x="1166.00" y="626.00" width="11.00" height="10.00" fill="#303036" stroke="#55555b" stroke-width="1.2" />
<circle cx="1204.00" cy="628.00" r="4.6" fill="#5f5f65"/>
<rect x="1208.00" y="625.00" width="6.00" height="7.00" fill="none" stroke="#4a4a50" stroke-width="1.2" />
<path d="M1196 634 l10 3 l8 -3" fill="none" stroke="#4a4a50" stroke-width="1.1" />
<path d="M1234.5 630 a7.8 7.8 0 0 1 15.6 0 z" fill="#9a9aa0" />
<path d="M1232 632 q10 6 21 0 M1233 622 l3 2 M1251 622 l-3 2" fill="none" stroke="#4a4a50" stroke-width="1.3" />
<rect x="112.50" y="653.60" width="1355.00" height="22.00" fill="#1f1f25" />
<line x1="112.50" y1="675.80" x2="1467.50" y2="675.80" stroke="#131316" stroke-width="1.4" />
<line x1="692.40" y1="654.50" x2="692.40" y2="675.00" stroke="#16161a" stroke-width="1.6" />
<circle cx="703.40" cy="664.50" r="1.5" fill="#7d7d86"/>
<circle cx="709.70" cy="664.50" r="1.5" fill="#7d7d86"/>
<circle cx="716.00" cy="664.50" r="1.5" fill="#7d7d86"/>
<rect x="727.00" y="653.60" width="2.00" height="226.00" fill="#18181c" />
<text x="734.50" y="668.49" font-size="10.8" fill="#efeff2" font-weight="bold" textLength="56.5" lengthAdjust="spacingAndGlyphs" >Keyframes</text>
<path d="M1209.5 661 l-3.6 3.6 l3.6 3.6 M1214 661 l3.6 3.6 l-3.6 3.6" fill="none" stroke="#8a8a92" stroke-width="1.2" />
<line x1="1244.00" y1="664.60" x2="1314.00" y2="664.60" stroke="#151518" stroke-width="2" />
<circle cx="1239.60" cy="664.40" r="3.4" fill="#c4c4c8"/>
<line x1="1329.80" y1="654.50" x2="1329.80" y2="675.00" stroke="#16161a" stroke-width="1.6" />
<rect x="1343.00" y="658.50" width="12.00" height="12.00" fill="none" stroke="#46464d" stroke-width="1.2" />
<path d="M1346 667.5 l6 -6 M1349 661.5 h3 v3" fill="none" stroke="#46464d" stroke-width="1.1" />
<line x1="1364.50" y1="654.50" x2="1364.50" y2="675.00" stroke="#16161a" stroke-width="1.6" />
<circle cx="1381.00" cy="663.50" r="4.2" fill="none" stroke="#5d5d65" stroke-width="1.3"/>
<line x1="1384.00" y1="666.80" x2="1388.00" y2="670.50" stroke="#5d5d65" stroke-width="1.5" />
<line x1="1398.50" y1="654.50" x2="1398.50" y2="675.00" stroke="#16161a" stroke-width="1.6" />
<circle cx="1415.50" cy="664.50" r="4.4" fill="none" stroke="#4d4d55" stroke-width="1.2"/>
<path d="M1415.5 657.5 v14 M1413 659.5 l2.5 -2.5 l2.5 2.5 M1413 669.5 l2.5 2.5 l2.5 -2.5" fill="none" stroke="#4d4d55" stroke-width="1" />
<line x1="1432.80" y1="654.50" x2="1432.80" y2="675.00" stroke="#16161a" stroke-width="1.6" />
<circle cx="1443.30" cy="664.50" r="1.5" fill="#7d7d86"/>
<circle cx="1449.60" cy="664.50" r="1.5" fill="#7d7d86"/>
<circle cx="1455.90" cy="664.50" r="1.5" fill="#7d7d86"/>
<rect x="112.50" y="676.60" width="614.50" height="204.00" fill="#25252a" />
<line x1="170.20" y1="676.60" x2="170.20" y2="880.00" stroke="#202024" stroke-width="1" />
<line x1="223.00" y1="676.60" x2="223.00" y2="880.00" stroke="#202024" stroke-width="1" />
<line x1="275.80" y1="676.60" x2="275.80" y2="880.00" stroke="#202024" stroke-width="1" />
<line x1="328.60" y1="676.60" x2="328.60" y2="880.00" stroke="#202024" stroke-width="1" />
<line x1="381.40" y1="676.60" x2="381.40" y2="880.00" stroke="#202024" stroke-width="1" />
<line x1="434.20" y1="676.60" x2="434.20" y2="880.00" stroke="#202024" stroke-width="1" />
<line x1="487.00" y1="676.60" x2="487.00" y2="880.00" stroke="#202024" stroke-width="1" />
<line x1="539.80" y1="676.60" x2="539.80" y2="880.00" stroke="#202024" stroke-width="1" />
<line x1="592.60" y1="676.60" x2="592.60" y2="880.00" stroke="#202024" stroke-width="1" />
<line x1="645.40" y1="676.60" x2="645.40" y2="880.00" stroke="#202024" stroke-width="1" />
<line x1="698.20" y1="676.60" x2="698.20" y2="880.00" stroke="#202024" stroke-width="1" />
<line x1="112.50" y1="703.60" x2="726.50" y2="703.60" stroke="#202024" stroke-width="1" />
<line x1="112.50" y1="756.40" x2="726.50" y2="756.40" stroke="#202024" stroke-width="1" />
<line x1="112.50" y1="809.20" x2="726.50" y2="809.20" stroke="#202024" stroke-width="1" />
<line x1="112.50" y1="862.00" x2="726.50" y2="862.00" stroke="#202024" stroke-width="1" />
<line x1="277.70" y1="723.40" x2="355.00" y2="796.30" stroke="#dcb016" stroke-width="2.1" />
<line x1="452.80" y1="797.00" x2="546.90" y2="760.20" stroke="#dcb016" stroke-width="2.1" />
<rect x="187.00" y="714.70" width="81.70" height="16.30" fill="#34343c" rx="2.5" stroke="#17171a" stroke-width="1" />
<rect x="188.50" y="728.60" width="78.50" height="1.80" fill="#4c9a2a" />
<text x="227.80" y="725.31" font-size="10.3" fill="#e4e4e6" text-anchor="middle" textLength="43.0" lengthAdjust="spacingAndGlyphs" >MediaIn1</text>
<path d="M177 719.8 l6.8 3.3 l-6.8 3.3 z" fill="#29b4e8" />
<rect x="271.00" y="720.00" width="6.60" height="6.60" fill="#e4e4e4" />
<rect x="360.50" y="788.20" width="84.50" height="18.20" fill="#3f4146" rx="3" stroke="#b23a30" stroke-width="1.6" />
<rect x="363.00" y="803.00" width="79.50" height="1.40" fill="#77797e" />
<text x="402.00" y="800.31" font-size="10.3" fill="#f0f0f0" text-anchor="middle" textLength="68.0" lengthAdjust="spacingAndGlyphs" >S_FlysEyeHex1</text>
<path d="M400.2 779.8 h7.4 l-3.7 5 z" fill="#7cc81e" />
<path d="M400.2 814.2 h7.4 l-3.7 -5 z" fill="#2aaee6" />
<path d="M353.5 793.4 l7 3.6 l-7 3.6 z" fill="#e3b518" />
<rect x="446.00" y="793.80" width="6.80" height="6.80" fill="#f0f0f0" />
<rect x="555.90" y="751.70" width="80.30" height="15.60" fill="#34343c" rx="2.5" stroke="#17171a" stroke-width="1" />
<rect x="557.00" y="765.20" width="78.00" height="1.60" fill="#77777c" />
<text x="596.00" y="762.31" font-size="10.3" fill="#e4e4e6" text-anchor="middle" textLength="54.0" lengthAdjust="spacingAndGlyphs" >MediaOut1</text>
<path d="M545.4 756.4 l7 3.6 l-7 3.6 z" fill="#e3b518" />
<rect x="639.00" y="756.60" width="6.40" height="6.40" fill="#88888c" />
<rect x="561.00" y="768.60" width="18.00" height="8.50" fill="#1a1a1d" rx="2" />
<circle cx="566.00" cy="772.80" r="1.4" fill="#e8e8e8"/>
<circle cx="573.60" cy="772.80" r="1.4" fill="#e8e8e8"/>
<rect x="730.00" y="676.60" width="737.60" height="180.00" fill="#27272e" />
<rect x="730.00" y="676.60" width="208.50" height="180.00" fill="#26262d" />
<rect x="938.40" y="676.60" width="2.40" height="180.00" fill="#1c1c21" />
<rect x="730" y="676.6" width="737.6" height="22" fill="url(#shd)"/>
<text x="947.46" y="688.02" font-size="8.4" fill="#66666e" >-20</text>
<line x1="1010.00" y1="677.00" x2="1010.00" y2="845.00" stroke="#222228" stroke-width="1.3" />
<text x="1016.00" y="688.02" font-size="8.4" fill="#66666e" >0</text>
<line x1="1079.54" y1="677.00" x2="1079.54" y2="845.00" stroke="#222228" stroke-width="1.3" />
<text x="1085.54" y="688.02" font-size="8.4" fill="#66666e" >20</text>
<line x1="1149.08" y1="677.00" x2="1149.08" y2="845.00" stroke="#222228" stroke-width="1.3" />
<text x="1155.08" y="688.02" font-size="8.4" fill="#66666e" >40</text>
<line x1="1218.62" y1="677.00" x2="1218.62" y2="845.00" stroke="#222228" stroke-width="1.3" />
<text x="1224.62" y="688.02" font-size="8.4" fill="#66666e" >60</text>
<line x1="1288.16" y1="677.00" x2="1288.16" y2="845.00" stroke="#222228" stroke-width="1.3" />
<text x="1294.16" y="688.02" font-size="8.4" fill="#66666e" >80</text>
<line x1="1357.70" y1="677.00" x2="1357.70" y2="845.00" stroke="#222228" stroke-width="1.3" />
<text x="1363.70" y="688.02" font-size="8.4" fill="#66666e" >100</text>
<line x1="1427.24" y1="677.00" x2="1427.24" y2="845.00" stroke="#222228" stroke-width="1.3" />
<text x="1433.24" y="688.02" font-size="8.4" fill="#66666e" >120</text>
<rect x="940.80" y="766.70" width="526.80" height="21.20" fill="#32323c" />
<rect x="730.00" y="766.70" width="205.50" height="21.20" fill="#141619" />
<rect x="740.00" y="710.30" width="9.00" height="6.60" fill="none" rx="1.2" stroke="#62626a" stroke-width="1.5" />
<path d="M742 710.3 v-2.2 a2.5 2.5 0 0 1 5 0 v2.2" fill="none" stroke="#62626a" stroke-width="1.2" />
<rect x="740.00" y="732.20" width="9.00" height="6.60" fill="none" rx="1.2" stroke="#62626a" stroke-width="1.5" />
<path d="M742 732.2 v-2.2 a2.5 2.5 0 0 1 5 0 v2.2" fill="none" stroke="#62626a" stroke-width="1.2" />
<rect x="740.00" y="754.00" width="9.00" height="6.60" fill="none" rx="1.2" stroke="#62626a" stroke-width="1.5" />
<path d="M742 754 v-2.2 a2.5 2.5 0 0 1 5 0 v2.2" fill="none" stroke="#62626a" stroke-width="1.2" />
<rect x="740.00" y="776.00" width="9.00" height="6.60" fill="none" rx="1.2" stroke="#62626a" stroke-width="1.5" />
<path d="M742 776 v-2.2 a2.5 2.5 0 0 1 5 0 v2.2" fill="none" stroke="#62626a" stroke-width="1.2" />
<rect x="740.00" y="798.70" width="9.00" height="6.60" fill="none" rx="1.2" stroke="#62626a" stroke-width="1.5" />
<path d="M742 798.7 v-2.2 a2.5 2.5 0 0 1 5 0 v2.2" fill="none" stroke="#62626a" stroke-width="1.2" />
<path d="M759.05 710.00 L762.80 714.00 L766.55 710.00" fill="none" stroke="#77777f" stroke-width="1.2" stroke-linecap="round" stroke-linejoin="round"/>
<text x="774.80" y="715.09" font-size="10.8" fill="#7d7d84" textLength="47.0" lengthAdjust="spacingAndGlyphs" >MediaIn1</text>
<text x="793.60" y="736.91" font-size="10.3" fill="#5e5e66" textLength="59.0" lengthAdjust="spacingAndGlyphs" >左声道(Left)</text>
<text x="793.60" y="758.71" font-size="10.3" fill="#5e5e66" textLength="65.5" lengthAdjust="spacingAndGlyphs" >右声道(Right)</text>
<text x="774.80" y="780.89" font-size="10.8" fill="#f2f2f4" textLength="73.0" lengthAdjust="spacingAndGlyphs" >S_FlysEyeHex1</text>
<text x="774.80" y="802.79" font-size="10.8" fill="#7d7d84" textLength="56.0" lengthAdjust="spacingAndGlyphs" >MediaOut1</text>
<rect x="1010.00" y="702.80" width="311.00" height="20.20" fill="#4c6c27" rx="1.5" stroke="#6d9838" stroke-width="1.2" />
<text x="1016.90" y="716.76" font-size="11" fill="#f0f0f0" text-anchor="middle" >0</text>
<text x="1305.30" y="716.76" font-size="11" fill="#f0f0f0" text-anchor="middle" >88</text>
<text x="1158.50" y="716.56" font-size="11" fill="#f2f2f2" text-anchor="middle" textLength="81.5" lengthAdjust="spacingAndGlyphs" >Adjustment Clip</text>
<line x1="1009.70" y1="733.80" x2="1248.70" y2="733.80" stroke="#2b9b62" stroke-width="1.5" />
<line x1="1009.70" y1="755.60" x2="1248.70" y2="755.60" stroke="#2b9b62" stroke-width="1.5" />
<rect x="1010.00" y="768.40" width="311.00" height="20.00" fill="#79797d" rx="1.5" stroke="#a4a4a8" stroke-width="1.2" />
<text x="1016.90" y="782.36" font-size="11" fill="#f4f4f4" text-anchor="middle" >0</text>
<text x="1305.30" y="782.36" font-size="11" fill="#f4f4f4" text-anchor="middle" >88</text>
<rect x="1010.00" y="790.30" width="311.00" height="20.00" fill="#5b5b60" rx="1.5" stroke="#808086" stroke-width="1.2" />
<text x="1016.90" y="804.26" font-size="11" fill="#f4f4f4" text-anchor="middle" >0</text>
<text x="1305.30" y="804.26" font-size="11" fill="#f4f4f4" text-anchor="middle" >88</text>
<line x1="1143.20" y1="684.00" x2="1143.20" y2="844.00" stroke="#c8352c" stroke-width="1.1" />
<path d="M1136.2 678 h14 v5 l-7 7.5 l-7 -7.5 z" fill="#ee4a3c" />
<rect x="958.40" y="846.00" width="27.60" height="7.40" fill="#4c4c52" rx="3.7" />
<line x1="730.00" y1="856.40" x2="1467.50" y2="856.40" stroke="#16161a" stroke-width="1.6" />
<rect x="730.00" y="857.20" width="737.60" height="23.30" fill="#25252b" />
<path d="M750 866 v8 M754 863 v11 M758 867 v7" fill="none" stroke="#3c3c43" stroke-width="1.4" />
<rect x="786.00" y="866.50" width="17.00" height="9.00" fill="none" stroke="#6a6a72" stroke-width="1.3" />
<path d="M786 870.5 h17 M791.6 866.5 v9 M797.3 866.5 v9" fill="none" stroke="#6a6a72" stroke-width="1" />
<rect x="1311.70" y="863.50" width="73.00" height="12.00" fill="#18181b" rx="2" />
<text x="1319.50" y="875.10" font-size="10" fill="#c8c8cc" textLength="20.5" lengthAdjust="spacingAndGlyphs" >时间</text>
<path d="M1370.00 869.50 L1374.00 873.50 L1378.00 869.50" fill="none" stroke="#8a8a92" stroke-width="1.3" stroke-linecap="round" stroke-linejoin="round"/>
<rect x="1398.00" y="863.50" width="62.00" height="12.00" fill="#18181b" rx="2" />
<rect x="1467.60" y="152.40" width="383.50" height="728.10" fill="#28282f" />
<line x1="1467.60" y1="152.40" x2="1467.60" y2="874.50" stroke="#17171b" stroke-width="1.6" />
<rect x="1561.60" y="160.60" width="190.40" height="19.60" fill="#26262d" rx="9.8" stroke="#33333b" stroke-width="1.2" />
<path d="M1571.4 160.6 h85.6 v19.6 h-85.6 a9.8 9.8 0 0 1 0 -19.6 z" fill="#141619" />
<text x="1610.50" y="174.28" font-size="10.5" fill="#e03a2c" text-anchor="middle" font-weight="bold" textLength="21.0" lengthAdjust="spacingAndGlyphs" >工具</text>
<text x="1705.00" y="174.28" font-size="10.5" fill="#3b3b44" text-anchor="middle" textLength="32.0" lengthAdjust="spacingAndGlyphs" >修改器</text>
<line x1="1467.60" y1="216.40" x2="1851.10" y2="216.40" stroke="#19191d" stroke-width="2.6" />
<rect x="1481.70" y="196.80" width="22.00" height="11.00" fill="#1d1d21" rx="5.5" />
<circle cx="1496.40" cy="202.30" r="3.3" fill="#f04a36"/>
<text x="1511.90" y="206.48" font-size="11.6" fill="#f0f0f2" textLength="78.8" lengthAdjust="spacingAndGlyphs" >S_FlysEyeHex1</text>
<circle cx="1698.00" cy="202.30" r="3.1" fill="#c0c0c4"/>
<path d="M1710.60 200.70 L1714.60 204.90 L1718.60 200.70" fill="none" stroke="#9a9aa2" stroke-width="1.4" stroke-linecap="round" stroke-linejoin="round"/>
<line x1="1729.00" y1="194.00" x2="1729.00" y2="211.00" stroke="#3a3a42" stroke-width="1.2" />
<rect x="1743.00" y="201.00" width="11.00" height="8.00" fill="none" rx="1" stroke="#5d5d66" stroke-width="1.2" />
<path d="M1745.5 201 v-2.4 h11 v7.6 h-2.5" fill="none" stroke="#5d5d66" stroke-width="1.2" />
<path d="M1770 208.5 l4.5 -4.5 M1773 201.5 l4 -4 l3.6 3.6 l-4 4 z" fill="#8a8a92" stroke="#8a8a92" stroke-width="1.3" />
<rect x="1795.50" y="202.50" width="9.00" height="6.60" fill="none" rx="1.2" stroke="#5d5d66" stroke-width="1.5" />
<path d="M1797.5 202.5 v-2.2 a2.5 2.5 0 0 1 5 0 v2.2" fill="none" stroke="#5d5d66" stroke-width="1.2" />
<path d="M1821.5 199 a5.6 5.6 0 1 1 -1.6 5.5 M1819.3 197.5 v3.6 h3.6" fill="none" stroke="#5d5d66" stroke-width="1.3" />
<path d="M1825.5 200.5 v3 l2 1.2" fill="none" stroke="#5d5d66" stroke-width="1" />
<rect x="1468.60" y="218.00" width="382.50" height="46.00" fill="#25252b" />
<rect x="1622.00" y="225.40" width="19.60" height="14.60" fill="none" rx="2" stroke="#ececec" stroke-width="1.6" />
<path d="M1626 230.3 h11.6 M1626 235.2 h11.6" fill="none" stroke="#ececec" stroke-width="1.3" />
<rect x="1632.50" y="228.80" width="2.40" height="3.00" fill="#ececec" />
<rect x="1628.80" y="233.70" width="2.40" height="3.00" fill="#ececec" />
<text x="1631.60" y="255.06" font-size="9.6" fill="#d0d0d4" text-anchor="middle" textLength="19.5" lengthAdjust="spacingAndGlyphs" >控制</text>
<rect x="1603.60" y="261.60" width="55.00" height="2.40" fill="#e0432f" />
<rect x="1675.00" y="226.00" width="17.50" height="13.00" fill="none" rx="2" stroke="#50505a" stroke-width="1.4" />
<circle cx="1692.50" cy="238.00" r="3.4" fill="#26262d" stroke="#9a9aa2" stroke-width="1.5"/>
<text x="1685.40" y="255.06" font-size="9.6" fill="#8a8a92" text-anchor="middle" textLength="18.5" lengthAdjust="spacingAndGlyphs" >设置</text>
<line x1="1467.60" y1="265.40" x2="1851.10" y2="265.40" stroke="#18181c" stroke-width="2.4" />
<rect x="1523.00" y="270.80" width="271.60" height="20.00" fill="none" rx="10.0" stroke="#3d3d47" stroke-width="1.3" />
<text x="1659.30" y="284.71" font-size="10.3" fill="#8f8f96" text-anchor="middle" >Load Preset</text>
<rect x="1523.00" y="294.00" width="271.60" height="20.00" fill="none" rx="10.0" stroke="#3d3d47" stroke-width="1.3" />
<text x="1659.30" y="307.91" font-size="10.3" fill="#8f8f96" text-anchor="middle" >Save Preset</text>
<rect x="1523.00" y="317.00" width="271.60" height="19.80" fill="none" rx="9.9" stroke="#3d3d47" stroke-width="1.3" />
<text x="1659.30" y="330.81" font-size="10.3" fill="#8f8f96" text-anchor="middle" >Edit Mocha</text>
<text x="1643.80" y="353.31" font-size="10.3" fill="#85858c" text-anchor="middle" textLength="67.5" lengthAdjust="spacingAndGlyphs" >Mocha Project</text>
<line x1="1480.40" y1="366.00" x2="1836.00" y2="366.00" stroke="#1c1c21" stroke-width="1.6" />
<path d="M1487 376.6 l4 4 l-4 4" fill="none" stroke="#c8c8cc" stroke-width="1.4" />
<text x="1500.00" y="384.56" font-size="11" fill="#c4c4c8" textLength="34.5" lengthAdjust="spacingAndGlyphs" >Mocha</text>
<line x1="1480.40" y1="394.40" x2="1836.00" y2="394.40" stroke="#1c1c21" stroke-width="1.6" />
<text x="1601.00" y="412.61" font-size="10.3" fill="#b9b9be" text-anchor="end" textLength="67.2" lengthAdjust="spacingAndGlyphs" >Tile Frequency</text>
<line x1="1612.00" y1="408.90" x2="1734.00" y2="408.90" stroke="#1a1a1e" stroke-width="2.2" />
<circle cx="1620.80" cy="408.90" r="3.5" fill="#b8b8bc"/>
<circle cx="1627.00" cy="416.60" r="1.3" fill="#a6a6aa"/>
<rect x="1744.40" y="400.30" width="50.60" height="17.20" fill="#1b1b1f" rx="2" />
<text x="1769.30" y="412.86" font-size="11" fill="#eaeaec" text-anchor="middle" >5.68</text>
<path d="M1818.3 405.5 l3.4 3.4 l-3.4 3.4 l-3.4 -3.4 z" fill="#9a9aa0" />
<text x="1601.00" y="435.51" font-size="10.3" fill="#b9b9be" text-anchor="end" textLength="66.4" lengthAdjust="spacingAndGlyphs" >Tile Rel Height</text>
<line x1="1612.00" y1="431.80" x2="1734.00" y2="431.80" stroke="#1a1a1e" stroke-width="2.2" />
<circle cx="1643.50" cy="431.80" r="3.5" fill="#b8b8bc"/>
<circle cx="1626.00" cy="440.00" r="1.3" fill="#a6a6aa"/>
<rect x="1744.40" y="423.20" width="50.60" height="17.20" fill="#1b1b1f" rx="2" />
<text x="1769.30" y="435.76" font-size="11" fill="#eaeaec" text-anchor="middle" >2.517</text>
<path d="M1818.3 428.40000000000003 l3.4 3.4 l-3.4 3.4 l-3.4 -3.4 z" fill="#9a9aa0" />
<text x="1601.00" y="458.11" font-size="10.3" fill="#b9b9be" text-anchor="end" textLength="47.9" lengthAdjust="spacingAndGlyphs" >Tile Shift X</text>
<line x1="1612.00" y1="454.40" x2="1734.00" y2="454.40" stroke="#1a1a1e" stroke-width="2.2" />
<circle cx="1669.70" cy="454.40" r="3.5" fill="#b8b8bc"/>
<circle cx="1673.60" cy="463.50" r="1.3" fill="#a6a6aa"/>
<rect x="1744.40" y="445.80" width="50.60" height="17.20" fill="#1b1b1f" rx="2" />
<text x="1769.30" y="458.36" font-size="11" fill="#eaeaec" text-anchor="middle" >-0.016</text>
<path d="M1818.3 451.0 l3.4 3.4 l-3.4 3.4 l-3.4 -3.4 z" fill="#9a9aa0" />
<text x="1601.00" y="480.81" font-size="10.3" fill="#b9b9be" text-anchor="end" textLength="47.9" lengthAdjust="spacingAndGlyphs" >Tile Shift Y</text>
<line x1="1612.00" y1="477.10" x2="1734.00" y2="477.10" stroke="#1a1a1e" stroke-width="2.2" />
<circle cx="1681.30" cy="477.10" r="3.5" fill="#b8b8bc"/>
<circle cx="1673.60" cy="485.90" r="1.3" fill="#a6a6aa"/>
<rect x="1744.40" y="468.50" width="50.60" height="17.20" fill="#1b1b1f" rx="2" />
<text x="1769.30" y="481.06" font-size="11" fill="#eaeaec" text-anchor="middle" >0.036</text>
<path d="M1818.3 473.70000000000005 l3.4 3.4 l-3.4 3.4 l-3.4 -3.4 z" fill="#9a9aa0" />
<text x="1601.00" y="503.51" font-size="10.3" fill="#b9b9be" text-anchor="end" textLength="48.9" lengthAdjust="spacingAndGlyphs" >Tile Rotate</text>
<line x1="1612.00" y1="499.80" x2="1734.00" y2="499.80" stroke="#1a1a1e" stroke-width="2.2" />
<circle cx="1690.90" cy="499.80" r="3.5" fill="#b8b8bc"/>
<circle cx="1673.60" cy="508.50" r="1.3" fill="#a6a6aa"/>
<rect x="1744.40" y="491.20" width="50.60" height="17.20" fill="#1b1b1f" rx="2" />
<text x="1769.30" y="503.76" font-size="11" fill="#eaeaec" text-anchor="middle" >109.0</text>
<path d="M1818.3 496.40000000000003 l3.4 3.4 l-3.4 3.4 l-3.4 -3.4 z" fill="#9a9aa0" />
<text x="1601.00" y="526.91" font-size="10.3" fill="#b9b9be" text-anchor="end" textLength="65.2" lengthAdjust="spacingAndGlyphs" >Edge Softness</text>
<line x1="1612.00" y1="523.20" x2="1734.00" y2="523.20" stroke="#1a1a1e" stroke-width="2.2" />
<circle cx="1647.80" cy="523.20" r="3.5" fill="#b8b8bc"/>
<circle cx="1614.90" cy="531.70" r="1.3" fill="#a6a6aa"/>
<rect x="1744.40" y="514.60" width="50.60" height="17.20" fill="#1b1b1f" rx="2" />
<text x="1769.30" y="527.16" font-size="11" fill="#eaeaec" text-anchor="middle" >0.283</text>
<path d="M1818.3 519.8000000000001 l3.4 3.4 l-3.4 3.4 l-3.4 -3.4 z" fill="#9a9aa0" />
<text x="1601.00" y="549.51" font-size="10.3" fill="#b9b9be" text-anchor="end" textLength="53.0" lengthAdjust="spacingAndGlyphs" >Inside Zdist</text>
<line x1="1612.00" y1="545.80" x2="1734.00" y2="545.80" stroke="#1a1a1e" stroke-width="2.2" />
<circle cx="1629.80" cy="545.80" r="3.5" fill="#b8b8bc"/>
<circle cx="1637.50" cy="554.00" r="1.3" fill="#a6a6aa"/>
<rect x="1744.40" y="537.20" width="50.60" height="17.20" fill="#1b1b1f" rx="2" />
<text x="1769.30" y="549.76" font-size="11" fill="#eaeaec" text-anchor="middle" >1.34</text>
<path d="M1818.3 542.4 l3.4 3.4 l-3.4 3.4 l-3.4 -3.4 z" fill="#9a9aa0" />
<text x="1601.00" y="572.21" font-size="10.3" fill="#b9b9be" text-anchor="end" textLength="60.8" lengthAdjust="spacingAndGlyphs" >Inside Rotate</text>
<line x1="1612.00" y1="568.50" x2="1734.00" y2="568.50" stroke="#1a1a1e" stroke-width="2.2" />
<circle cx="1673.00" cy="568.50" r="3.5" fill="#b8b8bc"/>
<rect x="1744.40" y="559.90" width="50.60" height="17.20" fill="#1b1b1f" rx="2" />
<text x="1769.30" y="572.46" font-size="11" fill="#eaeaec" text-anchor="middle" >0.0</text>
<path d="M1818.3 565.1 l3.4 3.4 l-3.4 3.4 l-3.4 -3.4 z" fill="#9a9aa0" />
<text x="1601.00" y="594.61" font-size="10.3" fill="#b9b9be" text-anchor="end" textLength="58.7" lengthAdjust="spacingAndGlyphs" >Overall Zdist</text>
<line x1="1612.00" y1="590.90" x2="1734.00" y2="590.90" stroke="#1a1a1e" stroke-width="2.2" />
<circle cx="1675.60" cy="590.90" r="3.5" fill="#b8b8bc"/>
<circle cx="1685.00" cy="599.00" r="1.3" fill="#a6a6aa"/>
<rect x="1744.40" y="582.30" width="50.60" height="17.20" fill="#1b1b1f" rx="2" />
<text x="1769.30" y="594.86" font-size="11" fill="#eaeaec" text-anchor="middle" >0.16</text>
<path d="M1818.3 587.5 l3.4 3.4 l-3.4 3.4 l-3.4 -3.4 z" fill="#9a9aa0" />
<text x="1601.00" y="617.91" font-size="10.3" fill="#b9b9be" text-anchor="end" textLength="25.2" lengthAdjust="spacingAndGlyphs" >Wrap</text>
<rect x="1610.00" y="605.60" width="184.60" height="16.80" fill="#1b1b1f" rx="2.5" />
<text x="1617.00" y="618.02" font-size="10.6" fill="#ececee" textLength="32.0" lengthAdjust="spacingAndGlyphs" >Reflect</text>
<path d="M1778.50 611.70 L1783.00 616.30 L1787.50 611.70" fill="none" stroke="#8d8d95" stroke-width="1.2" stroke-linecap="round" stroke-linejoin="round"/>
<path d="M1818.3 610.8 l3.4 3.4 l-3.4 3.4 l-3.4 -3.4 z" fill="#9a9aa0" />
<rect x="1610.50" y="630.00" width="13.00" height="13.00" fill="#1b1b1f" rx="2" />
<path d="M1613.5 637 l3 3.4 l5.5 -8.4" fill="none" stroke="#f4f4f4" stroke-width="1.9" stroke-linecap="round" stroke-linejoin="round"/>
<text x="1632.40" y="640.41" font-size="10.3" fill="#b4b4b9" textLength="23.2" lengthAdjust="spacingAndGlyphs" >Filter</text>
<path d="M1818.3 633.3 l3.4 3.4 l-3.4 3.4 l-3.4 -3.4 z" fill="#9a9aa0" />
<line x1="1480.40" y1="653.80" x2="1836.00" y2="653.80" stroke="#1c1c21" stroke-width="1.6" />
<path d="M1484.50 665.20 L1488.50 669.60 L1492.50 665.20" fill="none" stroke="#c8c8cc" stroke-width="1.4" stroke-linecap="round" stroke-linejoin="round"/>
<text x="1499.80" y="671.36" font-size="11" fill="#c4c4c8" textLength="54.8" lengthAdjust="spacingAndGlyphs" >Crop Input</text>
<text x="1601.00" y="695.61" font-size="10.3" fill="#b9b9be" text-anchor="end" textLength="42.8" lengthAdjust="spacingAndGlyphs" >Crop Left</text>
<line x1="1612.00" y1="691.90" x2="1734.00" y2="691.90" stroke="#1a1a1e" stroke-width="2.2" />
<circle cx="1661.50" cy="691.90" r="3.5" fill="#b8b8bc"/>
<circle cx="1614.90" cy="700.00" r="1.3" fill="#a6a6aa"/>
<rect x="1744.40" y="683.30" width="50.60" height="17.20" fill="#1b1b1f" rx="2" />
<text x="1769.30" y="695.86" font-size="11" fill="#eaeaec" text-anchor="middle" >0.402</text>
<path d="M1818.3 688.5 l3.4 3.4 l-3.4 3.4 l-3.4 -3.4 z" fill="#9a9aa0" />
<text x="1601.00" y="718.01" font-size="10.3" fill="#b9b9be" text-anchor="end" textLength="48.9" lengthAdjust="spacingAndGlyphs" >Crop Right</text>
<line x1="1612.00" y1="714.30" x2="1734.00" y2="714.30" stroke="#1a1a1e" stroke-width="2.2" />
<circle cx="1655.00" cy="714.30" r="3.5" fill="#b8b8bc"/>
<circle cx="1614.90" cy="722.60" r="1.3" fill="#a6a6aa"/>
<rect x="1744.40" y="705.70" width="50.60" height="17.20" fill="#1b1b1f" rx="2" />
<text x="1769.30" y="718.26" font-size="11" fill="#eaeaec" text-anchor="middle" >0.346</text>
<path d="M1818.3 710.9 l3.4 3.4 l-3.4 3.4 l-3.4 -3.4 z" fill="#9a9aa0" />
<text x="1601.00" y="740.71" font-size="10.3" fill="#b9b9be" text-anchor="end" textLength="42.8" lengthAdjust="spacingAndGlyphs" >Crop Top</text>
<line x1="1612.00" y1="737.00" x2="1734.00" y2="737.00" stroke="#1a1a1e" stroke-width="2.2" />
<circle cx="1622.00" cy="737.00" r="3.5" fill="#b8b8bc"/>
<circle cx="1614.90" cy="745.40" r="1.3" fill="#a6a6aa"/>
<rect x="1744.40" y="728.40" width="50.60" height="17.20" fill="#1b1b1f" rx="2" />
<text x="1769.30" y="740.96" font-size="11" fill="#eaeaec" text-anchor="middle" >0.063</text>
<path d="M1818.3 733.6 l3.4 3.4 l-3.4 3.4 l-3.4 -3.4 z" fill="#9a9aa0" />
<text x="1601.00" y="763.91" font-size="10.3" fill="#b9b9be" text-anchor="end" textLength="60.0" lengthAdjust="spacingAndGlyphs" >Crop Bottom</text>
<line x1="1612.00" y1="760.20" x2="1734.00" y2="760.20" stroke="#1a1a1e" stroke-width="2.2" />
<circle cx="1614.90" cy="760.20" r="3.5" fill="#b8b8bc"/>
<rect x="1744.40" y="751.60" width="50.60" height="17.20" fill="#1b1b1f" rx="2" />
<text x="1769.30" y="764.16" font-size="11" fill="#eaeaec" text-anchor="middle" >0.0</text>
<path d="M1818.3 756.8000000000001 l3.4 3.4 l-3.4 3.4 l-3.4 -3.4 z" fill="#9a9aa0" />
<line x1="1480.40" y1="777.00" x2="1836.00" y2="777.00" stroke="#1c1c21" stroke-width="1.6" />
<rect x="1610.50" y="786.80" width="13.00" height="13.00" fill="#1b1b1f" rx="2" />
<text x="1632.40" y="797.41" font-size="10.3" fill="#b4b4b9" textLength="68.2" lengthAdjust="spacingAndGlyphs" >Show Tile Freq</text>
<rect x="1610.50" y="809.30" width="13.00" height="13.00" fill="#1b1b1f" rx="2" />
<text x="1632.40" y="820.11" font-size="10.3" fill="#b4b4b9" textLength="68.2" lengthAdjust="spacingAndGlyphs" >Show Tile Shift</text>
<rect x="1523.00" y="829.00" width="271.60" height="19.60" fill="none" rx="9.8" stroke="#3d3d47" stroke-width="1.3" />
<text x="1659.30" y="842.71" font-size="10.3" fill="#8f8f96" text-anchor="middle" >Help</text>
<line x1="1467.60" y1="858.00" x2="1851.10" y2="858.00" stroke="#1d1d22" stroke-width="2.4" />
<rect x="1468.60" y="859.20" width="382.50" height="21.30" fill="#2a2a31" />
<rect x="1848.70" y="79.30" width="8.00" height="801.00" fill="#1d1c1c" />
<g font-size="39" fill="#ffffff" opacity="0.2" letter-spacing="4.2"><text class="wm" x="171" y="45" transform="rotate(23 171 45)">Yilenee</text>
<text class="wm" x="584" y="45" transform="rotate(23 584 45)">Yilenee</text>
<text class="wm" x="997" y="45" transform="rotate(23 997 45)">Yilenee</text>
<text class="wm" x="1410" y="45" transform="rotate(23 1410 45)">Yilenee</text>
<text class="wm" x="1823" y="45" transform="rotate(23 1823 45)">Yilenee</text>
<text class="wm" x="396" y="458" transform="rotate(23 396 458)">Yilenee</text>
<text class="wm" x="802" y="458" transform="rotate(23 802 458)">Yilenee</text>
<text class="wm" x="1208" y="458" transform="rotate(23 1208 458)">Yilenee</text>
<text class="wm" x="1614" y="458" transform="rotate(23 1614 458)">Yilenee</text>
<text class="wm" x="185" y="863" transform="rotate(23 185 863)">Yilenee</text>
<text class="wm" x="594" y="863" transform="rotate(23 594 863)">Yilenee</text>
<text class="wm" x="1003" y="863" transform="rotate(23 1003 863)">Yilenee</text>
<text class="wm" x="1412" y="863" transform="rotate(23 1412 863)">Yilenee</text>
<text class="wm" x="1821" y="863" transform="rotate(23 1821 863)">Yilenee</text>
</g>
</g>
<rect x="0" y="0" width="118.5" height="932" fill="#ffffff"/>
<rect x="1851.1" y="0" width="708.9000000000001" height="932" fill="#ffffff"/>
<rect x="0" y="0" width="2560" height="57.3" fill="#ffffff"/>
<rect x="0" y="874.3" width="2560" height="57.700000000000045" fill="#ffffff"/>
</svg>
</body></html>
